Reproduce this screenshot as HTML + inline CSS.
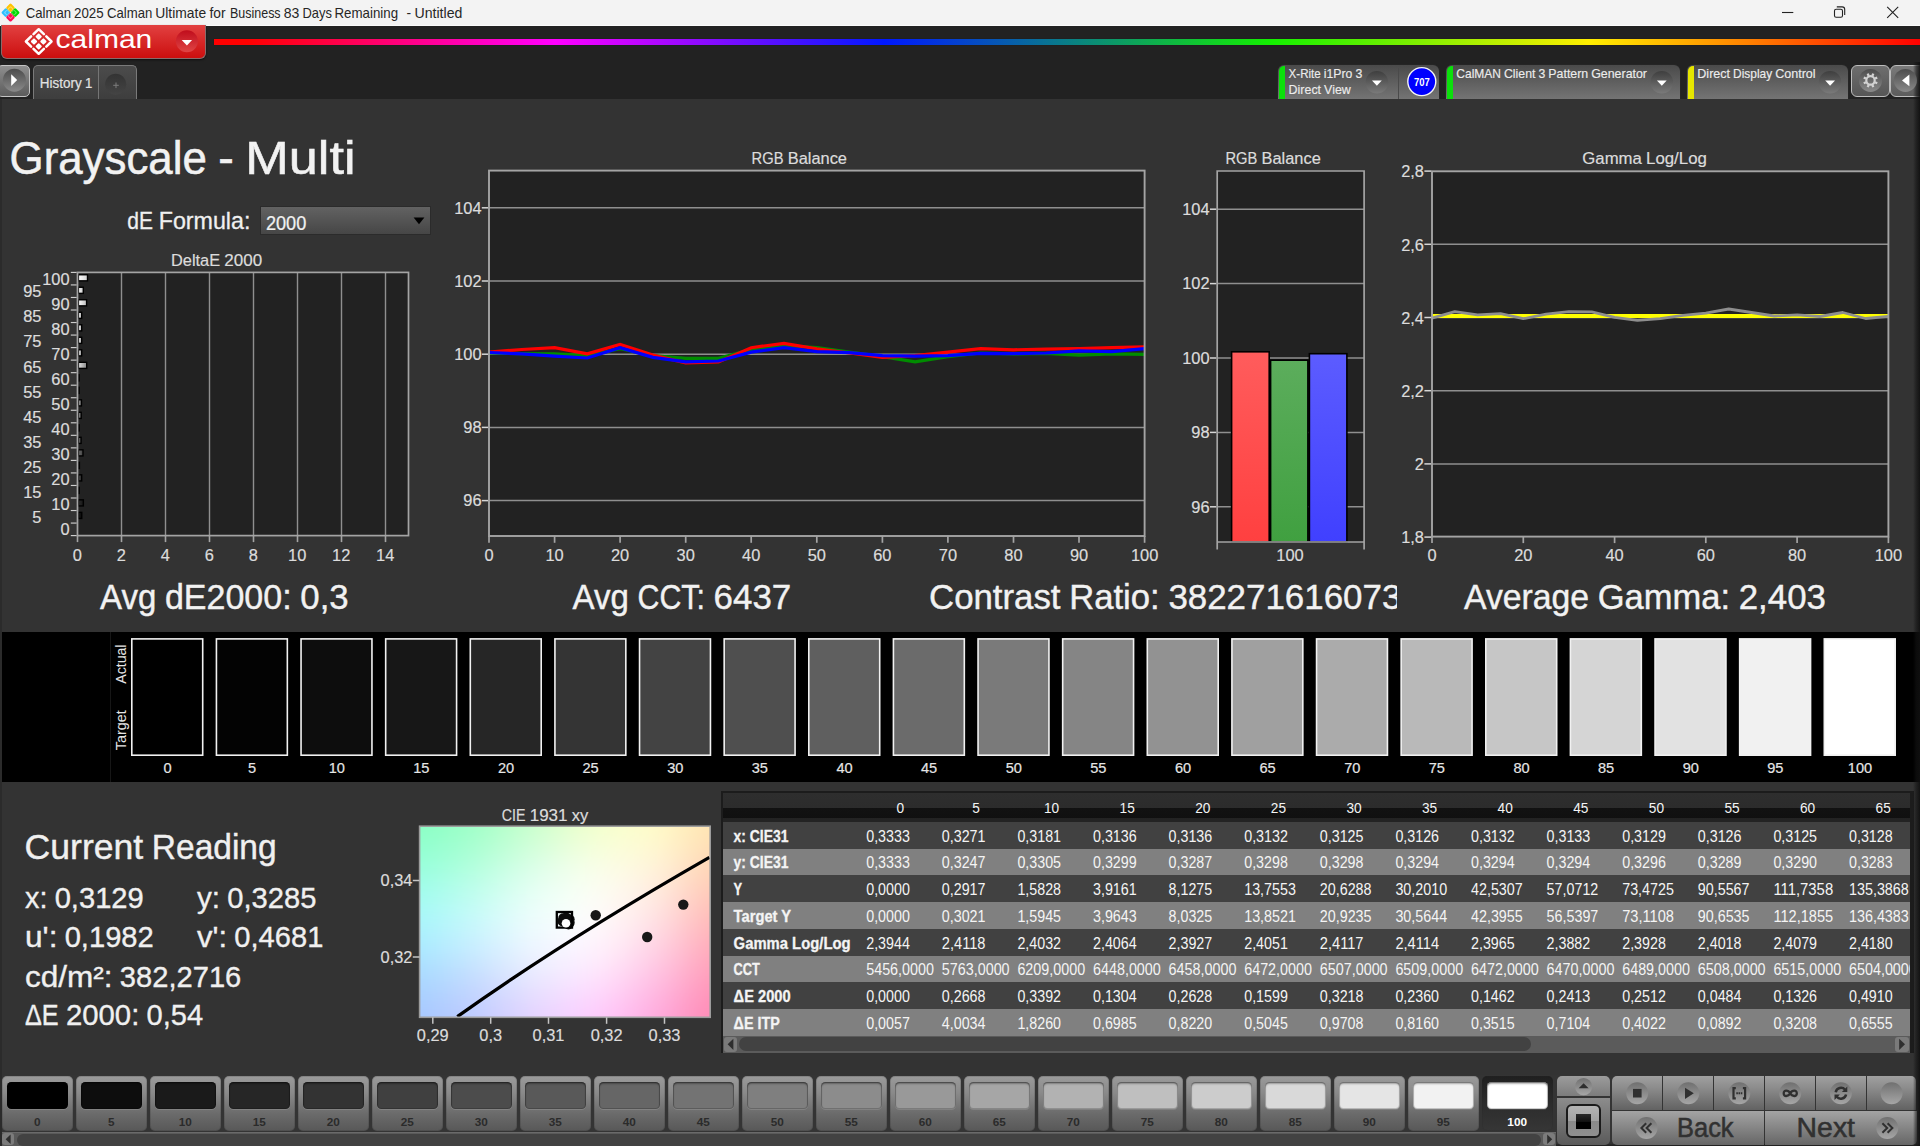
<!DOCTYPE html>
<html lang="en">
<head>
<meta charset="utf-8">
<title>Calman 2025 - Grayscale - Multi</title>
<style>
html,body{margin:0;padding:0;}
body{width:1920px;height:1146px;overflow:hidden;background:#333;font-family:"Liberation Sans",sans-serif;position:relative;}
#app{position:absolute;left:0;top:0;width:1920px;height:1146px;overflow:hidden;}
#app>div{position:absolute;box-sizing:border-box;}
svg.layer{position:absolute;left:0;top:0;width:1920px;height:1146px;overflow:hidden;pointer-events:none;}
svg.layer text{font-family:"Liberation Sans",sans-serif;}
</style>
</head>
<body>
<div id="app">
<div style="left:0px;top:0px;width:1920px;height:26px;background:#f3f3f3;border-bottom:1px solid #fbfbfb"></div>
<div style="left:0px;top:26px;width:1920px;height:73px;background:#222"></div>
<div style="left:213.5px;top:39.25px;width:1706.5px;height:6.2px;background:linear-gradient(90deg,#ff0000 0%,#ff0000 2%,#ff00ff 20%,#0018ff 39.3%,#14f000 62%,#ffee00 80.6%,#ff8000 90%,#ff0000 100%);box-shadow:0 0 1px rgba(0,0,0,.3)"></div>
<div style="left:0.5px;top:25px;width:205.5px;height:33.5px;background:linear-gradient(#e24141,#d82a2a 45%,#cc0f0f);border-radius:0 0 6px 6px;border:1px solid #8a6a6a;border-top:none;box-shadow:0 1px 2px rgba(0,0,0,.6)"></div>
<div style="left:-3px;top:65px;width:33px;height:31.5px;background:linear-gradient(#8e8e8e,#5c5c5c);border:1.5px solid #c4c4c4;border-radius:5px"></div>
<div style="left:33px;top:65px;width:103.5px;height:36px;background:linear-gradient(#4b4b4b,#3d3d3d);border:1px solid #7a7a7a;border-bottom:none;border-radius:5px 5px 0 0"></div>
<div style="left:98px;top:66px;width:1px;height:33px;background:#757575"></div>
<div style="left:1278.3px;top:65px;width:161px;height:34px;background:linear-gradient(#4a4a4a,#747474);border-radius:6px 6px 0 0;box-shadow:0 0 0 1px rgba(40,40,40,.6)"></div>
<div style="left:1279.1px;top:66px;width:6px;height:33px;background:#0be00b;border-radius:5px 0 0 0"></div>
<div style="left:1398px;top:68px;width:1.2px;height:31px;background:#4a4a4a"></div>
<div style="left:1446px;top:65px;width:233.7px;height:34px;background:linear-gradient(#4a4a4a,#747474);border-radius:6px 6px 0 0;box-shadow:0 0 0 1px rgba(40,40,40,.6)"></div>
<div style="left:1446.8px;top:66px;width:6px;height:33px;background:#0be00b;border-radius:5px 0 0 0"></div>
<div style="left:1687px;top:65px;width:160.8px;height:34px;background:linear-gradient(#4a4a4a,#747474);border-radius:6px 6px 0 0;box-shadow:0 0 0 1px rgba(40,40,40,.6)"></div>
<div style="left:1687.8px;top:66px;width:6px;height:33px;background:#e6e600;border-radius:5px 0 0 0"></div>
<div style="left:1851px;top:65px;width:38.5px;height:31.5px;background:linear-gradient(#6e6e6e,#565656);border:1.5px solid #bdbdbd;border-radius:6px"></div>
<div style="left:1889.5px;top:65px;width:40px;height:31.5px;background:linear-gradient(#7a7a7a,#5c5c5c);border:1.5px solid #bdbdbd;border-radius:6px"></div>
<div style="left:0px;top:99px;width:1920px;height:533px;background:#333"></div>
<div style="left:0px;top:99px;width:2px;height:1047px;background:#2a2a2a"></div>
<div style="left:260.2px;top:206px;width:170.9px;height:28.6px;background:linear-gradient(#626262,#464646);border:1px solid #2b2b2b"></div>
<div style="left:0px;top:632px;width:1920px;height:150.3px;background:#000"></div>
<div style="left:110px;top:632px;width:1px;height:150px;background:#161616"></div>
<div style="left:0px;top:782.3px;width:1920px;height:293px;background:#333"></div>
<div style="left:0px;top:782.3px;width:2px;height:364px;background:#2a2a2a"></div>
<div style="left:721px;top:791px;width:1192.5px;height:261.6px;background:#1c1c1c"></div>
<div style="left:722.8px;top:793px;width:1187.2px;height:29px;background:linear-gradient(#2e2e2e 0,#2c2c2c 50%,#121212 51%,#101010 86%,#232323 88%,#232323 100%)"></div>
<div style="left:722.8px;top:821.8px;width:1187.2px;height:27.07px;background:#414141"></div>
<div style="left:722.8px;top:848.57px;width:1187.2px;height:27.07px;background:#808080"></div>
<div style="left:722.8px;top:875.34px;width:1187.2px;height:27.07px;background:#414141"></div>
<div style="left:722.8px;top:902.11px;width:1187.2px;height:27.07px;background:#808080"></div>
<div style="left:722.8px;top:928.88px;width:1187.2px;height:27.07px;background:#414141"></div>
<div style="left:722.8px;top:955.65px;width:1187.2px;height:27.07px;background:#808080"></div>
<div style="left:722.8px;top:982.42px;width:1187.2px;height:27.07px;background:#414141"></div>
<div style="left:722.8px;top:1009.19px;width:1187.2px;height:27.07px;background:#808080"></div>
<div style="left:722.8px;top:1036px;width:1187.2px;height:16.6px;background:#5b5b5b"></div>
<div style="left:723.6px;top:1037px;width:13.6px;height:14.6px;background:#7a7a7a;border-radius:3px"></div>
<div style="left:739px;top:1037.4px;width:792px;height:14px;background:#424242;border-radius:7px"></div>
<div style="left:1895.2px;top:1037px;width:13.6px;height:14.6px;background:#7a7a7a;border-radius:3px"></div>
<div style="left:0px;top:1075px;width:1920px;height:71px;background:linear-gradient(#343434 0,#343434 97%,#222 98.5%)"></div>
<div style="left:1.6px;top:1076.2px;width:71.4px;height:54.8px;background:linear-gradient(#9b9b9b,#8a8a8a 30%,#6a6a6a 70%,#585858);border-radius:5px;box-shadow:inset 0 0 0 1px rgba(40,40,40,.18)"></div>
<div style="left:7.2px;top:1081.6px;width:60.4px;height:27.3px;background:#000000;border-radius:4.5px;box-shadow:inset 0 1.5px 2px rgba(0,0,0,.45),inset 0 0 0 1px rgba(0,0,0,.18),0 1px 0 rgba(255,255,255,.12)"></div>
<div style="left:75.6px;top:1076.2px;width:71.4px;height:54.8px;background:linear-gradient(#9b9b9b,#8a8a8a 30%,#6a6a6a 70%,#585858);border-radius:5px;box-shadow:inset 0 0 0 1px rgba(40,40,40,.18)"></div>
<div style="left:81.2px;top:1081.6px;width:60.4px;height:27.3px;background:#0d0d0d;border-radius:4.5px;box-shadow:inset 0 1.5px 2px rgba(0,0,0,.45),inset 0 0 0 1px rgba(0,0,0,.18),0 1px 0 rgba(255,255,255,.12)"></div>
<div style="left:149.6px;top:1076.2px;width:71.4px;height:54.8px;background:linear-gradient(#9b9b9b,#8a8a8a 30%,#6a6a6a 70%,#585858);border-radius:5px;box-shadow:inset 0 0 0 1px rgba(40,40,40,.18)"></div>
<div style="left:155.2px;top:1081.6px;width:60.4px;height:27.3px;background:#1a1a1a;border-radius:4.5px;box-shadow:inset 0 1.5px 2px rgba(0,0,0,.45),inset 0 0 0 1px rgba(0,0,0,.18),0 1px 0 rgba(255,255,255,.12)"></div>
<div style="left:223.6px;top:1076.2px;width:71.4px;height:54.8px;background:linear-gradient(#9b9b9b,#8a8a8a 30%,#6a6a6a 70%,#585858);border-radius:5px;box-shadow:inset 0 0 0 1px rgba(40,40,40,.18)"></div>
<div style="left:229.2px;top:1081.6px;width:60.4px;height:27.3px;background:#262626;border-radius:4.5px;box-shadow:inset 0 1.5px 2px rgba(0,0,0,.45),inset 0 0 0 1px rgba(0,0,0,.18),0 1px 0 rgba(255,255,255,.12)"></div>
<div style="left:297.6px;top:1076.2px;width:71.4px;height:54.8px;background:linear-gradient(#9b9b9b,#8a8a8a 30%,#6a6a6a 70%,#585858);border-radius:5px;box-shadow:inset 0 0 0 1px rgba(40,40,40,.18)"></div>
<div style="left:303.2px;top:1081.6px;width:60.4px;height:27.3px;background:#333333;border-radius:4.5px;box-shadow:inset 0 1.5px 2px rgba(0,0,0,.45),inset 0 0 0 1px rgba(0,0,0,.18),0 1px 0 rgba(255,255,255,.12)"></div>
<div style="left:371.6px;top:1076.2px;width:71.4px;height:54.8px;background:linear-gradient(#9b9b9b,#8a8a8a 30%,#6a6a6a 70%,#585858);border-radius:5px;box-shadow:inset 0 0 0 1px rgba(40,40,40,.18)"></div>
<div style="left:377.2px;top:1081.6px;width:60.4px;height:27.3px;background:#404040;border-radius:4.5px;box-shadow:inset 0 1.5px 2px rgba(0,0,0,.45),inset 0 0 0 1px rgba(0,0,0,.18),0 1px 0 rgba(255,255,255,.12)"></div>
<div style="left:445.6px;top:1076.2px;width:71.4px;height:54.8px;background:linear-gradient(#9b9b9b,#8a8a8a 30%,#6a6a6a 70%,#585858);border-radius:5px;box-shadow:inset 0 0 0 1px rgba(40,40,40,.18)"></div>
<div style="left:451.2px;top:1081.6px;width:60.4px;height:27.3px;background:#4c4c4c;border-radius:4.5px;box-shadow:inset 0 1.5px 2px rgba(0,0,0,.45),inset 0 0 0 1px rgba(0,0,0,.18),0 1px 0 rgba(255,255,255,.12)"></div>
<div style="left:519.6px;top:1076.2px;width:71.4px;height:54.8px;background:linear-gradient(#9b9b9b,#8a8a8a 30%,#6a6a6a 70%,#585858);border-radius:5px;box-shadow:inset 0 0 0 1px rgba(40,40,40,.18)"></div>
<div style="left:525.2px;top:1081.6px;width:60.4px;height:27.3px;background:#595959;border-radius:4.5px;box-shadow:inset 0 1.5px 2px rgba(0,0,0,.45),inset 0 0 0 1px rgba(0,0,0,.18),0 1px 0 rgba(255,255,255,.12)"></div>
<div style="left:593.6px;top:1076.2px;width:71.4px;height:54.8px;background:linear-gradient(#9b9b9b,#8a8a8a 30%,#6a6a6a 70%,#585858);border-radius:5px;box-shadow:inset 0 0 0 1px rgba(40,40,40,.18)"></div>
<div style="left:599.2px;top:1081.6px;width:60.4px;height:27.3px;background:#666666;border-radius:4.5px;box-shadow:inset 0 1.5px 2px rgba(0,0,0,.45),inset 0 0 0 1px rgba(0,0,0,.18),0 1px 0 rgba(255,255,255,.12)"></div>
<div style="left:667.6px;top:1076.2px;width:71.4px;height:54.8px;background:linear-gradient(#9b9b9b,#8a8a8a 30%,#6a6a6a 70%,#585858);border-radius:5px;box-shadow:inset 0 0 0 1px rgba(40,40,40,.18)"></div>
<div style="left:673.2px;top:1081.6px;width:60.4px;height:27.3px;background:#737373;border-radius:4.5px;box-shadow:inset 0 1.5px 2px rgba(0,0,0,.45),inset 0 0 0 1px rgba(0,0,0,.18),0 1px 0 rgba(255,255,255,.12)"></div>
<div style="left:741.6px;top:1076.2px;width:71.4px;height:54.8px;background:linear-gradient(#9b9b9b,#8a8a8a 30%,#6a6a6a 70%,#585858);border-radius:5px;box-shadow:inset 0 0 0 1px rgba(40,40,40,.18)"></div>
<div style="left:747.2px;top:1081.6px;width:60.4px;height:27.3px;background:#7f7f7f;border-radius:4.5px;box-shadow:inset 0 1.5px 2px rgba(0,0,0,.45),inset 0 0 0 1px rgba(0,0,0,.18),0 1px 0 rgba(255,255,255,.12)"></div>
<div style="left:815.6px;top:1076.2px;width:71.4px;height:54.8px;background:linear-gradient(#9b9b9b,#8a8a8a 30%,#6a6a6a 70%,#585858);border-radius:5px;box-shadow:inset 0 0 0 1px rgba(40,40,40,.18)"></div>
<div style="left:821.2px;top:1081.6px;width:60.4px;height:27.3px;background:#8c8c8c;border-radius:4.5px;box-shadow:inset 0 1.5px 2px rgba(0,0,0,.45),inset 0 0 0 1px rgba(0,0,0,.18),0 1px 0 rgba(255,255,255,.12)"></div>
<div style="left:889.6px;top:1076.2px;width:71.4px;height:54.8px;background:linear-gradient(#9b9b9b,#8a8a8a 30%,#6a6a6a 70%,#585858);border-radius:5px;box-shadow:inset 0 0 0 1px rgba(40,40,40,.18)"></div>
<div style="left:895.2px;top:1081.6px;width:60.4px;height:27.3px;background:#999999;border-radius:4.5px;box-shadow:inset 0 1.5px 2px rgba(0,0,0,.45),inset 0 0 0 1px rgba(0,0,0,.18),0 1px 0 rgba(255,255,255,.12)"></div>
<div style="left:963.6px;top:1076.2px;width:71.4px;height:54.8px;background:linear-gradient(#9b9b9b,#8a8a8a 30%,#6a6a6a 70%,#585858);border-radius:5px;box-shadow:inset 0 0 0 1px rgba(40,40,40,.18)"></div>
<div style="left:969.2px;top:1081.6px;width:60.4px;height:27.3px;background:#a6a6a6;border-radius:4.5px;box-shadow:inset 0 1.5px 2px rgba(0,0,0,.45),inset 0 0 0 1px rgba(0,0,0,.18),0 1px 0 rgba(255,255,255,.12)"></div>
<div style="left:1037.6px;top:1076.2px;width:71.4px;height:54.8px;background:linear-gradient(#9b9b9b,#8a8a8a 30%,#6a6a6a 70%,#585858);border-radius:5px;box-shadow:inset 0 0 0 1px rgba(40,40,40,.18)"></div>
<div style="left:1043.2px;top:1081.6px;width:60.4px;height:27.3px;background:#b2b2b2;border-radius:4.5px;box-shadow:inset 0 1.5px 2px rgba(0,0,0,.45),inset 0 0 0 1px rgba(0,0,0,.18),0 1px 0 rgba(255,255,255,.12)"></div>
<div style="left:1111.6px;top:1076.2px;width:71.4px;height:54.8px;background:linear-gradient(#9b9b9b,#8a8a8a 30%,#6a6a6a 70%,#585858);border-radius:5px;box-shadow:inset 0 0 0 1px rgba(40,40,40,.18)"></div>
<div style="left:1117.2px;top:1081.6px;width:60.4px;height:27.3px;background:#bfbfbf;border-radius:4.5px;box-shadow:inset 0 1.5px 2px rgba(0,0,0,.45),inset 0 0 0 1px rgba(0,0,0,.18),0 1px 0 rgba(255,255,255,.12)"></div>
<div style="left:1185.6px;top:1076.2px;width:71.4px;height:54.8px;background:linear-gradient(#9b9b9b,#8a8a8a 30%,#6a6a6a 70%,#585858);border-radius:5px;box-shadow:inset 0 0 0 1px rgba(40,40,40,.18)"></div>
<div style="left:1191.2px;top:1081.6px;width:60.4px;height:27.3px;background:#cccccc;border-radius:4.5px;box-shadow:inset 0 1.5px 2px rgba(0,0,0,.45),inset 0 0 0 1px rgba(0,0,0,.18),0 1px 0 rgba(255,255,255,.12)"></div>
<div style="left:1259.6px;top:1076.2px;width:71.4px;height:54.8px;background:linear-gradient(#9b9b9b,#8a8a8a 30%,#6a6a6a 70%,#585858);border-radius:5px;box-shadow:inset 0 0 0 1px rgba(40,40,40,.18)"></div>
<div style="left:1265.2px;top:1081.6px;width:60.4px;height:27.3px;background:#d9d9d9;border-radius:4.5px;box-shadow:inset 0 1.5px 2px rgba(0,0,0,.45),inset 0 0 0 1px rgba(0,0,0,.18),0 1px 0 rgba(255,255,255,.12)"></div>
<div style="left:1333.6px;top:1076.2px;width:71.4px;height:54.8px;background:linear-gradient(#9b9b9b,#8a8a8a 30%,#6a6a6a 70%,#585858);border-radius:5px;box-shadow:inset 0 0 0 1px rgba(40,40,40,.18)"></div>
<div style="left:1339.2px;top:1081.6px;width:60.4px;height:27.3px;background:#e5e5e5;border-radius:4.5px;box-shadow:inset 0 1.5px 2px rgba(0,0,0,.45),inset 0 0 0 1px rgba(0,0,0,.18),0 1px 0 rgba(255,255,255,.12)"></div>
<div style="left:1407.6px;top:1076.2px;width:71.4px;height:54.8px;background:linear-gradient(#9b9b9b,#8a8a8a 30%,#6a6a6a 70%,#585858);border-radius:5px;box-shadow:inset 0 0 0 1px rgba(40,40,40,.18)"></div>
<div style="left:1413.2px;top:1081.6px;width:60.4px;height:27.3px;background:#f2f2f2;border-radius:4.5px;box-shadow:inset 0 1.5px 2px rgba(0,0,0,.45),inset 0 0 0 1px rgba(0,0,0,.18),0 1px 0 rgba(255,255,255,.12)"></div>
<div style="left:1481.6px;top:1076.2px;width:71.4px;height:54.8px;background:linear-gradient(#1f1f1f,#2b2b2b 45%,#363636);border-radius:5px;box-shadow:inset 0 0 0 1px rgba(40,40,40,.18)"></div>
<div style="left:1487.2px;top:1081.6px;width:60.4px;height:27.3px;background:#ffffff;border-radius:4.5px;box-shadow:inset 0 1.5px 2px rgba(0,0,0,.45),inset 0 0 0 1px rgba(0,0,0,.18),0 1px 0 rgba(255,255,255,.12)"></div>
<div style="left:0px;top:1132px;width:1556px;height:14px;background:#5a5a5a;border-top:1px solid #6a6a6a"></div>
<div style="left:2.2px;top:1133px;width:12px;height:12.4px;background:#7c7c7c;border-radius:3px"></div>
<div style="left:16.5px;top:1133.6px;width:1524px;height:12.4px;background:#424242;border-radius:6px"></div>
<div style="left:1543.2px;top:1133px;width:12px;height:12.4px;background:#7c7c7c;border-radius:3px"></div>
<div style="left:1557px;top:1076.2px;width:53.4px;height:20.3px;background:linear-gradient(#9c9c9c,#7c7c7c);border-radius:5px 5px 0 0"></div>
<div style="left:1557px;top:1097.8px;width:53.4px;height:46.9px;background:linear-gradient(#8c8c8c,#5a5a5a);border-radius:0 0 5px 5px"></div>
<div style="left:1566.2px;top:1103.6px;width:34.8px;height:34.8px;background:linear-gradient(#b4b4b4 0,#a2a2a2 50%,#8a8a8a 51%,#909090 100%);border:2.6px solid #1b1b1b;border-radius:6px"></div>
<div style="left:1576px;top:1113.8px;width:15.2px;height:15.2px;background:linear-gradient(#2a2a2a 0,#111 50%,#000 51%)"></div>
<div style="left:1612px;top:1076.2px;width:50.3px;height:33.6px;background:linear-gradient(#a0a0a0,#8c8c8c 35%,#626262);border-radius:5px 0 0 0"></div>
<div style="left:1663.3px;top:1076.2px;width:49.9px;height:33.6px;background:linear-gradient(#a0a0a0,#8c8c8c 35%,#626262);border-radius:0"></div>
<div style="left:1714.2px;top:1076.2px;width:50.1px;height:33.6px;background:linear-gradient(#a0a0a0,#8c8c8c 35%,#626262);border-radius:0"></div>
<div style="left:1765.3px;top:1076.2px;width:49.7px;height:33.6px;background:linear-gradient(#a0a0a0,#8c8c8c 35%,#626262);border-radius:0"></div>
<div style="left:1816px;top:1076.2px;width:49.6px;height:33.6px;background:linear-gradient(#a0a0a0,#8c8c8c 35%,#626262);border-radius:0"></div>
<div style="left:1866.6px;top:1076.2px;width:49.8px;height:33.6px;background:linear-gradient(#a0a0a0,#8c8c8c 35%,#626262);border-radius:0 5px 0 0"></div>
<div style="left:1612px;top:1111.2px;width:152.4px;height:33.5px;background:linear-gradient(#a4a4a4,#8e8e8e 35%,#666);border-radius:0 0 0 5px"></div>
<div style="left:1765.3px;top:1111.2px;width:152.1px;height:33.5px;background:linear-gradient(#a4a4a4,#8e8e8e 35%,#666);border-radius:0 0 5px 0"></div>
<div style="left:1913px;top:62px;width:7px;height:1084px;background:linear-gradient(90deg,rgba(20,20,20,0),rgba(20,20,20,.55) 45%,rgba(16,16,16,.92))"></div>
<div style="left:0px;top:99px;width:1.6px;height:1047px;background:#2b2b2b"></div>
<svg class="layer" width="1920" height="1146" viewBox="0 0 1920 1146">
<defs>
<linearGradient id="gRedC" x1="0" y1="0" x2="0" y2="1"><stop offset="0" stop-color="#c00d1c"/><stop offset="1" stop-color="#e04545"/></linearGradient>
<linearGradient id="gCirc" x1="0" y1="0" x2="0" y2="1"><stop offset="0" stop-color="#3e3e3e"/><stop offset="1" stop-color="#7a7a7a"/></linearGradient>
<linearGradient id="gCircL" x1="0" y1="0" x2="0" y2="1"><stop offset="0" stop-color="#4c4c4c"/><stop offset="1" stop-color="#8a8a8a"/></linearGradient>
<linearGradient id="gCircD" x1="0" y1="0" x2="0" y2="1"><stop offset="0" stop-color="#333"/><stop offset="1" stop-color="#444"/></linearGradient>
<linearGradient id="gb100" x1="0" y1="0" x2="1" y2="0"><stop offset="0" stop-color="#ffffff"/><stop offset="1" stop-color="#d1d1d1"/></linearGradient>
<linearGradient id="gb95" x1="0" y1="0" x2="1" y2="0"><stop offset="0" stop-color="#ffffff"/><stop offset="1" stop-color="#c7c7c7"/></linearGradient>
<linearGradient id="gb90" x1="0" y1="0" x2="1" y2="0"><stop offset="0" stop-color="#ffffff"/><stop offset="1" stop-color="#bcbcbc"/></linearGradient>
<linearGradient id="gb85" x1="0" y1="0" x2="1" y2="0"><stop offset="0" stop-color="#ffffff"/><stop offset="1" stop-color="#b2b2b2"/></linearGradient>
<linearGradient id="gb80" x1="0" y1="0" x2="1" y2="0"><stop offset="0" stop-color="#ffffff"/><stop offset="1" stop-color="#a7a7a7"/></linearGradient>
<linearGradient id="gb75" x1="0" y1="0" x2="1" y2="0"><stop offset="0" stop-color="#ffffff"/><stop offset="1" stop-color="#9d9d9d"/></linearGradient>
<linearGradient id="gb70" x1="0" y1="0" x2="1" y2="0"><stop offset="0" stop-color="#f2f2f2"/><stop offset="1" stop-color="#929292"/></linearGradient>
<linearGradient id="gb65" x1="0" y1="0" x2="1" y2="0"><stop offset="0" stop-color="#e2e2e2"/><stop offset="1" stop-color="#888888"/></linearGradient>
<linearGradient id="gb60" x1="0" y1="0" x2="1" y2="0"><stop offset="0" stop-color="#d1d1d1"/><stop offset="1" stop-color="#7d7d7d"/></linearGradient>
<linearGradient id="gb55" x1="0" y1="0" x2="1" y2="0"><stop offset="0" stop-color="#c1c1c1"/><stop offset="1" stop-color="#737373"/></linearGradient>
<linearGradient id="gb50" x1="0" y1="0" x2="1" y2="0"><stop offset="0" stop-color="#b0b0b0"/><stop offset="1" stop-color="#696969"/></linearGradient>
<linearGradient id="gb45" x1="0" y1="0" x2="1" y2="0"><stop offset="0" stop-color="#9f9f9f"/><stop offset="1" stop-color="#5e5e5e"/></linearGradient>
<linearGradient id="gb40" x1="0" y1="0" x2="1" y2="0"><stop offset="0" stop-color="#8f8f8f"/><stop offset="1" stop-color="#545454"/></linearGradient>
<linearGradient id="gb35" x1="0" y1="0" x2="1" y2="0"><stop offset="0" stop-color="#7e7e7e"/><stop offset="1" stop-color="#494949"/></linearGradient>
<linearGradient id="gb30" x1="0" y1="0" x2="1" y2="0"><stop offset="0" stop-color="#6e6e6e"/><stop offset="1" stop-color="#3f3f3f"/></linearGradient>
<linearGradient id="gb25" x1="0" y1="0" x2="1" y2="0"><stop offset="0" stop-color="#5d5d5d"/><stop offset="1" stop-color="#343434"/></linearGradient>
<linearGradient id="gb20" x1="0" y1="0" x2="1" y2="0"><stop offset="0" stop-color="#4c4c4c"/><stop offset="1" stop-color="#2a2a2a"/></linearGradient>
<linearGradient id="gb15" x1="0" y1="0" x2="1" y2="0"><stop offset="0" stop-color="#3c3c3c"/><stop offset="1" stop-color="#1f1f1f"/></linearGradient>
<linearGradient id="gb10" x1="0" y1="0" x2="1" y2="0"><stop offset="0" stop-color="#2b2b2b"/><stop offset="1" stop-color="#151515"/></linearGradient>
<linearGradient id="gb5" x1="0" y1="0" x2="1" y2="0"><stop offset="0" stop-color="#1b1b1b"/><stop offset="1" stop-color="#0a0a0a"/></linearGradient>
<linearGradient id="gR" x1="0" y1="0" x2="0" y2="1"><stop offset="0" stop-color="#ff5c5c"/><stop offset="1" stop-color="#ff4040"/></linearGradient>
<linearGradient id="gG" x1="0" y1="0" x2="0" y2="1"><stop offset="0" stop-color="#5cad5c"/><stop offset="1" stop-color="#40a040"/></linearGradient>
<linearGradient id="gB" x1="0" y1="0" x2="0" y2="1"><stop offset="0" stop-color="#5c5cff"/><stop offset="1" stop-color="#4040ff"/></linearGradient>
<filter id="blurCIE" x="-20%" y="-20%" width="140%" height="140%"><feGaussianBlur stdDeviation="26"/></filter>
<clipPath id="clipCIE"><rect x="419.6" y="826.2" width="290.6" height="191.1"/></clipPath>
<linearGradient id="gCircB" x1="0" y1="0" x2="0" y2="1"><stop offset="0" stop-color="#707070"/><stop offset="1" stop-color="#a6a6a6"/></linearGradient>
</defs>
<rect x="7.14" y="4.54" width="6.72" height="6.72" rx="1.3" fill="#ffc400" transform="rotate(45 10.50 7.90)"/>
<rect x="8.38" y="6.78" width="4.24" height="4.24" rx="0.8" fill="#ffd75c" transform="rotate(45 10.50 8.90)"/>
<rect x="9.09" y="7.89" width="2.83" height="2.83" rx="0.6" fill="#ffc400" transform="rotate(45 10.50 9.30)"/>
<rect x="2.44" y="9.24" width="6.72" height="6.72" rx="1.3" fill="#2ebfff" transform="rotate(45 5.80 12.60)"/>
<rect x="4.68" y="10.48" width="4.24" height="4.24" rx="0.8" fill="#7ed6ff" transform="rotate(45 6.80 12.60)"/>
<rect x="5.79" y="11.19" width="2.83" height="2.83" rx="0.6" fill="#2ebfff" transform="rotate(45 7.20 12.60)"/>
<rect x="11.84" y="9.24" width="6.72" height="6.72" rx="1.3" fill="#00d800" transform="rotate(45 15.20 12.60)"/>
<rect x="12.08" y="10.48" width="4.24" height="4.24" rx="0.8" fill="#5ee85e" transform="rotate(45 14.20 12.60)"/>
<rect x="12.39" y="11.19" width="2.83" height="2.83" rx="0.6" fill="#00d800" transform="rotate(45 13.80 12.60)"/>
<rect x="7.14" y="13.94" width="6.72" height="6.72" rx="1.3" fill="#ff0a54" transform="rotate(45 10.50 17.30)"/>
<rect x="8.38" y="14.18" width="4.24" height="4.24" rx="0.8" fill="#ff6a96" transform="rotate(45 10.50 16.30)"/>
<rect x="9.09" y="14.49" width="2.83" height="2.83" rx="0.6" fill="#ff0a54" transform="rotate(45 10.50 15.90)"/>
<path d="M1782 12.5H1793.3" stroke="#222" stroke-width="1.1" fill="none"/>
<rect x="1834.5" y="9.3" width="8" height="8" rx="1.6" fill="none" stroke="#222" stroke-width="1.1"/>
<path d="M1836.8 6.9H1842.2Q1844.7 6.9 1844.7 9.4V14.9" fill="none" stroke="#222" stroke-width="1.1"/>
<path d="M1887.2 6.9L1898.2 17.9M1898.2 6.9L1887.2 17.9" stroke="#222" stroke-width="1.1" fill="none"/>
<rect x="36.26" y="34.16" width="4.88" height="4.88" rx="0.9" fill="#fff" transform="rotate(45 38.70 36.60)"/>
<rect x="31.56" y="39.06" width="4.88" height="4.88" rx="0.9" fill="#fff" transform="rotate(45 34.00 41.50)"/>
<rect x="40.96" y="39.06" width="4.88" height="4.88" rx="0.9" fill="#fff" transform="rotate(45 43.40 41.50)"/>
<rect x="36.26" y="43.96" width="4.88" height="4.88" rx="0.9" fill="#fff" transform="rotate(45 38.70 46.40)"/>
<path d="M33.5 34.2L38.7 29.2L43.900000000000006 34.2 M33.5 48.8L38.7 53.8L43.900000000000006 48.8 M31.1 36.3L25.900000000000002 41.5L31.1 46.7 M46.300000000000004 36.3L51.5 41.5L46.300000000000004 46.7" fill="none" stroke="#fff" stroke-width="2.5" stroke-linecap="round" stroke-linejoin="round"/>
<circle cx="186.9" cy="41.3" r="11" fill="url(#gRedC)"/>
<path d="M181.7 39.9H192.1L186.9 45.6Z" fill="#fff"/>
<circle cx="14.4" cy="80.2" r="11.5" fill="url(#gCircL)"/>
<path d="M11.2 74.3L17.2 80.1L11.2 85.9Z" fill="#fff"/>
<circle cx="115.7" cy="84.3" r="10.6" fill="url(#gCircD)"/>
<path d="M113.2 85.3H118.8M116 82.5V88.1" stroke="#7c7c7c" stroke-width="1" fill="none"/>
<circle cx="1376.9" cy="82.2" r="11.3" fill="url(#gCirc)"/>
<path d="M1372.0 80.4H1381.8000000000002L1376.9 85.8Z" fill="#fff"/>
<circle cx="1421.8" cy="81.6" r="14" fill="#0000fe" stroke="#f4f4f4" stroke-width="1.4"/>
<circle cx="1661.8" cy="82.2" r="11.3" fill="url(#gCirc)"/>
<path d="M1656.8999999999999 80.4H1666.7L1661.8 85.8Z" fill="#fff"/>
<circle cx="1830.1" cy="82.2" r="11.3" fill="url(#gCirc)"/>
<path d="M1825.1999999999998 80.4H1835.0L1830.1 85.8Z" fill="#fff"/>
<circle cx="1870.5" cy="80.4" r="11.5" fill="url(#gCircL)"/>
<path d="M1874.93 82.24L1877.24 83.19M1872.34 84.83L1873.29 87.14M1868.66 84.83L1867.71 87.14M1866.07 82.24L1863.76 83.19M1866.07 78.56L1863.76 77.61M1868.66 75.97L1867.71 73.66M1872.34 75.97L1873.29 73.66M1874.93 78.56L1877.24 77.61" stroke="#d2d2d2" stroke-width="2.3" fill="none"/>
<circle cx="1870.5" cy="80.4" r="4.2" fill="none" stroke="#d2d2d2" stroke-width="2.2"/>
<circle cx="1905.4" cy="80.4" r="11.5" fill="url(#gCircL)"/>
<path d="M1909.4 74.6L1902 80.4L1909.4 86.2Z" fill="#fff"/>
<path d="M413.6 217.6H424.4L419 224.2Z" fill="#000"/>
<rect x="77.5" y="272.4" width="331.0" height="263.20000000000005" fill="#222"/>
<path d="M121.5 272.4V535.6" stroke="#8f8f8f" stroke-width="1.4"/>
<path d="M121.5 535.6V542.1" stroke="#a4a4a4" stroke-width="1.6"/>
<path d="M165.5 272.4V535.6" stroke="#8f8f8f" stroke-width="1.4"/>
<path d="M165.5 535.6V542.1" stroke="#a4a4a4" stroke-width="1.6"/>
<path d="M209.5 272.4V535.6" stroke="#8f8f8f" stroke-width="1.4"/>
<path d="M209.5 535.6V542.1" stroke="#a4a4a4" stroke-width="1.6"/>
<path d="M253.5 272.4V535.6" stroke="#8f8f8f" stroke-width="1.4"/>
<path d="M253.5 535.6V542.1" stroke="#a4a4a4" stroke-width="1.6"/>
<path d="M297.5 272.4V535.6" stroke="#8f8f8f" stroke-width="1.4"/>
<path d="M297.5 535.6V542.1" stroke="#a4a4a4" stroke-width="1.6"/>
<path d="M341.5 272.4V535.6" stroke="#8f8f8f" stroke-width="1.4"/>
<path d="M341.5 535.6V542.1" stroke="#a4a4a4" stroke-width="1.6"/>
<path d="M385.5 272.4V535.6" stroke="#8f8f8f" stroke-width="1.4"/>
<path d="M385.5 535.6V542.1" stroke="#a4a4a4" stroke-width="1.6"/>
<path d="M77.5 535.6V542.1" stroke="#a4a4a4" stroke-width="1.6"/>
<path d="M70.8 272.40H76.7" stroke="#cdcdcd" stroke-width="1.15"/>
<rect x="78.4" y="274.75" width="9.09" height="6.1" fill="url(#gb100)" stroke="#000" stroke-width="1.4"/>
<path d="M70.8 284.93H76.7" stroke="#cdcdcd" stroke-width="1.15"/>
<rect x="78.4" y="287.25" width="4.89" height="6.1" fill="url(#gb95)" stroke="#000" stroke-width="1.4"/>
<path d="M70.8 297.47H76.7" stroke="#cdcdcd" stroke-width="1.15"/>
<rect x="78.4" y="299.76" width="8.19" height="6.1" fill="url(#gb90)" stroke="#000" stroke-width="1.4"/>
<path d="M70.8 310.00H76.7" stroke="#cdcdcd" stroke-width="1.15"/>
<rect x="78.4" y="312.26" width="3.26" height="6.1" fill="url(#gb85)" stroke="#000" stroke-width="1.4"/>
<path d="M70.8 322.53H76.7" stroke="#cdcdcd" stroke-width="1.15"/>
<rect x="78.4" y="324.77" width="3.31" height="6.1" fill="url(#gb80)" stroke="#000" stroke-width="1.4"/>
<path d="M70.8 335.07H76.7" stroke="#cdcdcd" stroke-width="1.15"/>
<rect x="78.4" y="337.28" width="3.31" height="6.1" fill="url(#gb75)" stroke="#000" stroke-width="1.4"/>
<path d="M70.8 347.60H76.7" stroke="#cdcdcd" stroke-width="1.15"/>
<rect x="78.4" y="349.78" width="3.26" height="6.1" fill="url(#gb70)" stroke="#000" stroke-width="1.4"/>
<path d="M70.8 360.13H76.7" stroke="#cdcdcd" stroke-width="1.15"/>
<rect x="78.4" y="362.29" width="8.30" height="6.1" fill="url(#gb65)" stroke="#000" stroke-width="1.4"/>
<path d="M70.8 372.67H76.7" stroke="#cdcdcd" stroke-width="1.15"/>
<rect x="78.4" y="374.79" width="0.80" height="6.1" fill="url(#gb60)" stroke="#000" stroke-width="1.4"/>
<path d="M70.8 385.20H76.7" stroke="#cdcdcd" stroke-width="1.15"/>
<rect x="78.4" y="387.30" width="0.80" height="6.1" fill="url(#gb55)" stroke="#000" stroke-width="1.4"/>
<path d="M70.8 397.73H76.7" stroke="#cdcdcd" stroke-width="1.15"/>
<rect x="78.4" y="399.80" width="3.03" height="6.1" fill="url(#gb50)" stroke="#000" stroke-width="1.4"/>
<path d="M70.8 410.27H76.7" stroke="#cdcdcd" stroke-width="1.15"/>
<rect x="78.4" y="412.31" width="2.81" height="6.1" fill="url(#gb45)" stroke="#000" stroke-width="1.4"/>
<path d="M70.8 422.80H76.7" stroke="#cdcdcd" stroke-width="1.15"/>
<rect x="78.4" y="424.81" width="0.80" height="6.1" fill="url(#gb40)" stroke="#000" stroke-width="1.4"/>
<path d="M70.8 435.33H76.7" stroke="#cdcdcd" stroke-width="1.15"/>
<rect x="78.4" y="437.31" width="2.69" height="6.1" fill="url(#gb35)" stroke="#000" stroke-width="1.4"/>
<path d="M70.8 447.87H76.7" stroke="#cdcdcd" stroke-width="1.15"/>
<rect x="78.4" y="449.82" width="4.58" height="6.1" fill="url(#gb30)" stroke="#000" stroke-width="1.4"/>
<path d="M70.8 460.40H76.7" stroke="#cdcdcd" stroke-width="1.15"/>
<rect x="78.4" y="462.32" width="1.02" height="6.1" fill="url(#gb25)" stroke="#000" stroke-width="1.4"/>
<path d="M70.8 472.93H76.7" stroke="#cdcdcd" stroke-width="1.15"/>
<rect x="78.4" y="474.83" width="3.28" height="6.1" fill="url(#gb20)" stroke="#000" stroke-width="1.4"/>
<path d="M70.8 485.47H76.7" stroke="#cdcdcd" stroke-width="1.15"/>
<rect x="78.4" y="487.33" width="0.80" height="6.1" fill="url(#gb15)" stroke="#000" stroke-width="1.4"/>
<path d="M70.8 498.00H76.7" stroke="#cdcdcd" stroke-width="1.15"/>
<rect x="78.4" y="499.84" width="4.96" height="6.1" fill="url(#gb10)" stroke="#000" stroke-width="1.4"/>
<path d="M70.8 510.53H76.7" stroke="#cdcdcd" stroke-width="1.15"/>
<rect x="78.4" y="512.35" width="3.37" height="6.1" fill="url(#gb5)" stroke="#000" stroke-width="1.4"/>
<path d="M70.8 523.07H76.7" stroke="#cdcdcd" stroke-width="1.15"/>
<path d="M70.8 535.6H76.7" stroke="#cdcdcd" stroke-width="1.15"/>
<rect x="77.5" y="272.4" width="331.0" height="263.20000000000005" fill="none" stroke="#a4a4a4" stroke-width="1.7"/>
<rect x="489" y="170.6" width="655.5999999999999" height="365.4" fill="#222"/>
<path d="M489 500.6H1144.6" stroke="#8f8f8f" stroke-width="1.5"/>
<path d="M481.8 500.6H488.2" stroke="#d6d6d6" stroke-width="1.5"/>
<path d="M489 427.4H1144.6" stroke="#8f8f8f" stroke-width="1.5"/>
<path d="M481.8 427.4H488.2" stroke="#d6d6d6" stroke-width="1.5"/>
<path d="M489 354.2H1144.6" stroke="#8f8f8f" stroke-width="1.5"/>
<path d="M481.8 354.2H488.2" stroke="#d6d6d6" stroke-width="1.5"/>
<path d="M489 281.0H1144.6" stroke="#8f8f8f" stroke-width="1.5"/>
<path d="M481.8 281.0H488.2" stroke="#d6d6d6" stroke-width="1.5"/>
<path d="M489 207.8H1144.6" stroke="#8f8f8f" stroke-width="1.5"/>
<path d="M481.8 207.8H488.2" stroke="#d6d6d6" stroke-width="1.5"/>
<polyline points="489.0,353.0 521.8,353.6 554.6,353.9 587.3,355.7 620.1,348.6 652.9,355.7 685.7,358.3 718.5,358.3 751.2,349.5 784.0,345.6 816.8,347.5 849.6,352.1 882.4,356.6 915.1,361.9 947.9,356.6 980.7,353.0 1013.5,353.9 1046.3,353.4 1079.0,355.1 1111.8,353.9 1144.6,354.4" fill="none" stroke="#008c00" stroke-width="3.2" stroke-linejoin="miter"/>
<polyline points="489.0,352.1 521.8,349.5 554.6,347.7 587.3,353.9 620.1,344.5 652.9,355.1 685.7,362.8 718.5,361.9 751.2,347.7 784.0,343.3 816.8,348.9 849.6,353.0 882.4,357.4 915.1,355.7 947.9,352.1 980.7,348.6 1013.5,349.8 1046.3,349.1 1079.0,348.6 1111.8,347.7 1144.6,346.8" fill="none" stroke="#ff0000" stroke-width="3.2" stroke-linejoin="miter"/>
<polyline points="489.0,352.5 521.8,353.9 554.6,356.2 587.3,358.0 620.1,347.7 652.9,357.4 685.7,361.9 718.5,361.0 751.2,352.1 784.0,347.7 816.8,351.6 849.6,352.7 882.4,355.7 915.1,356.2 947.9,355.7 980.7,353.4 1013.5,353.6 1046.3,353.0 1079.0,350.9 1111.8,351.6 1144.6,348.6" fill="none" stroke="#0000ff" stroke-width="3.2" stroke-linejoin="miter"/>
<rect x="489" y="170.6" width="655.5999999999999" height="365.4" fill="none" stroke="#a4a4a4" stroke-width="1.9"/>
<path d="M489.0 536V542.8" stroke="#a4a4a4" stroke-width="1.7"/>
<path d="M554.6 536V542.8" stroke="#a4a4a4" stroke-width="1.7"/>
<path d="M620.1 536V542.8" stroke="#a4a4a4" stroke-width="1.7"/>
<path d="M685.7 536V542.8" stroke="#a4a4a4" stroke-width="1.7"/>
<path d="M751.2 536V542.8" stroke="#a4a4a4" stroke-width="1.7"/>
<path d="M816.8 536V542.8" stroke="#a4a4a4" stroke-width="1.7"/>
<path d="M882.4 536V542.8" stroke="#a4a4a4" stroke-width="1.7"/>
<path d="M947.9 536V542.8" stroke="#a4a4a4" stroke-width="1.7"/>
<path d="M1013.5 536V542.8" stroke="#a4a4a4" stroke-width="1.7"/>
<path d="M1079.0 536V542.8" stroke="#a4a4a4" stroke-width="1.7"/>
<path d="M1144.6 536V542.8" stroke="#a4a4a4" stroke-width="1.7"/>
<rect x="1217.2" y="171" width="146.89999999999986" height="371" fill="#222"/>
<path d="M1217.2 506.8H1364.1" stroke="#8f8f8f" stroke-width="1.5"/>
<path d="M1210.0 506.8H1216.4" stroke="#d6d6d6" stroke-width="1.5"/>
<path d="M1217.2 432.4H1364.1" stroke="#8f8f8f" stroke-width="1.5"/>
<path d="M1210.0 432.4H1216.4" stroke="#d6d6d6" stroke-width="1.5"/>
<path d="M1217.2 358.0H1364.1" stroke="#8f8f8f" stroke-width="1.5"/>
<path d="M1210.0 358.0H1216.4" stroke="#d6d6d6" stroke-width="1.5"/>
<path d="M1217.2 283.6H1364.1" stroke="#8f8f8f" stroke-width="1.5"/>
<path d="M1210.0 283.6H1216.4" stroke="#d6d6d6" stroke-width="1.5"/>
<path d="M1217.2 209.2H1364.1" stroke="#8f8f8f" stroke-width="1.5"/>
<path d="M1210.0 209.2H1216.4" stroke="#d6d6d6" stroke-width="1.5"/>
<rect x="1231.6" y="351.8" width="37.6" height="190.2" fill="url(#gR)" stroke="#000" stroke-width="1.6"/>
<rect x="1270.6" y="360.2" width="37.3" height="181.8" fill="url(#gG)" stroke="#000" stroke-width="1.6"/>
<rect x="1309.4" y="353.7" width="37.5" height="188.3" fill="url(#gB)" stroke="#000" stroke-width="1.6"/>
<path d="M1217.2 549.5V171H1364.1V549.5M1217.2 542H1364.1" fill="none" stroke="#a4a4a4" stroke-width="1.7"/>
<rect x="1432" y="171.3" width="456.4000000000001" height="365.3" fill="#222"/>
<path d="M1424.4 537.1H1431.2" stroke="#d6d6d6" stroke-width="1.5"/>
<path d="M1432 463.9H1888.4" stroke="#8f8f8f" stroke-width="1.5"/>
<path d="M1424.4 463.9H1431.2" stroke="#d6d6d6" stroke-width="1.5"/>
<path d="M1432 390.7H1888.4" stroke="#8f8f8f" stroke-width="1.5"/>
<path d="M1424.4 390.7H1431.2" stroke="#d6d6d6" stroke-width="1.5"/>
<path d="M1432 317.5H1888.4" stroke="#8f8f8f" stroke-width="1.5"/>
<path d="M1424.4 317.5H1431.2" stroke="#d6d6d6" stroke-width="1.5"/>
<path d="M1432 244.3H1888.4" stroke="#8f8f8f" stroke-width="1.5"/>
<path d="M1424.4 244.3H1431.2" stroke="#d6d6d6" stroke-width="1.5"/>
<path d="M1424.4 171.1H1431.2" stroke="#d6d6d6" stroke-width="1.5"/>
<path d="M1432 316H1888.4" stroke="#ffff00" stroke-width="4.2"/>
<polyline points="1432.0,318.1 1454.8,311.7 1477.6,314.8 1500.5,313.7 1523.3,318.7 1546.1,314.1 1568.9,311.7 1591.7,311.8 1614.6,317.3 1637.4,320.3 1660.2,318.6 1683.0,315.3 1705.8,313.1 1728.7,309.0 1751.5,312.5 1774.3,316.0 1797.1,314.8 1819.9,316.5 1842.8,312.5 1865.6,318.5 1888.4,316.3" fill="none" stroke="#8e8e8e" stroke-width="2.8" stroke-linejoin="round"/>
<rect x="1432" y="171.3" width="456.4000000000001" height="365.3" fill="none" stroke="#a4a4a4" stroke-width="1.9"/>
<path d="M1432.0 536.6V543.1" stroke="#a4a4a4" stroke-width="1.7"/>
<path d="M1523.3 536.6V543.1" stroke="#a4a4a4" stroke-width="1.7"/>
<path d="M1614.6 536.6V543.1" stroke="#a4a4a4" stroke-width="1.7"/>
<path d="M1705.8 536.6V543.1" stroke="#a4a4a4" stroke-width="1.7"/>
<path d="M1797.1 536.6V543.1" stroke="#a4a4a4" stroke-width="1.7"/>
<path d="M1888.4 536.6V543.1" stroke="#a4a4a4" stroke-width="1.7"/>
<clipPath id="clipCR"><rect x="900" y="570" width="497" height="60"/></clipPath>
<rect x="131.80" y="638.9" width="70.9" height="116.3" fill="#000000" stroke="#f1f1f1" stroke-width="1.6"/>
<rect x="216.43" y="638.9" width="70.9" height="116.3" fill="#030303" stroke="#f1f1f1" stroke-width="1.6"/>
<rect x="301.05" y="638.9" width="70.9" height="116.3" fill="#0d0d0d" stroke="#f1f1f1" stroke-width="1.6"/>
<rect x="385.68" y="638.9" width="70.9" height="116.3" fill="#171717" stroke="#f1f1f1" stroke-width="1.6"/>
<rect x="470.30" y="638.9" width="70.9" height="116.3" fill="#262626" stroke="#f1f1f1" stroke-width="1.6"/>
<rect x="554.92" y="638.9" width="70.9" height="116.3" fill="#343434" stroke="#f1f1f1" stroke-width="1.6"/>
<rect x="639.55" y="638.9" width="70.9" height="116.3" fill="#434343" stroke="#f1f1f1" stroke-width="1.6"/>
<rect x="724.17" y="638.9" width="70.9" height="116.3" fill="#4f4f4f" stroke="#f1f1f1" stroke-width="1.6"/>
<rect x="808.80" y="638.9" width="70.9" height="116.3" fill="#5f5f5f" stroke="#f1f1f1" stroke-width="1.6"/>
<rect x="893.42" y="638.9" width="70.9" height="116.3" fill="#6b6b6b" stroke="#f1f1f1" stroke-width="1.6"/>
<rect x="978.05" y="638.9" width="70.9" height="116.3" fill="#7a7a7a" stroke="#f1f1f1" stroke-width="1.6"/>
<rect x="1062.67" y="638.9" width="70.9" height="116.3" fill="#858585" stroke="#f1f1f1" stroke-width="1.6"/>
<rect x="1147.30" y="638.9" width="70.9" height="116.3" fill="#929292" stroke="#f1f1f1" stroke-width="1.6"/>
<rect x="1231.92" y="638.9" width="70.9" height="116.3" fill="#a0a0a0" stroke="#f1f1f1" stroke-width="1.6"/>
<rect x="1316.55" y="638.9" width="70.9" height="116.3" fill="#ababab" stroke="#f1f1f1" stroke-width="1.6"/>
<rect x="1401.17" y="638.9" width="70.9" height="116.3" fill="#b9b9b9" stroke="#f1f1f1" stroke-width="1.6"/>
<rect x="1485.80" y="638.9" width="70.9" height="116.3" fill="#c6c6c6" stroke="#f1f1f1" stroke-width="1.6"/>
<rect x="1570.42" y="638.9" width="70.9" height="116.3" fill="#d5d5d5" stroke="#f1f1f1" stroke-width="1.6"/>
<rect x="1655.05" y="638.9" width="70.9" height="116.3" fill="#e2e2e2" stroke="#f1f1f1" stroke-width="1.6"/>
<rect x="1739.67" y="638.9" width="70.9" height="116.3" fill="#f1f1f1" stroke="#f1f1f1" stroke-width="1.6"/>
<rect x="1824.30" y="638.9" width="70.9" height="116.3" fill="#ffffff" stroke="#f1f1f1" stroke-width="1.6"/>
<g clip-path="url(#clipCIE)"><g filter="url(#blurCIE)"><rect x="299.6" y="706.2" width="530.6" height="431.0999999999999" fill="#fff"/><rect x="290.5" y="702.3" width="158.6" height="148.3" fill="#86ffc0"/><rect x="448.7" y="702.3" width="58.6" height="148.3" fill="#9cffc4"/><rect x="506.8" y="702.3" width="58.6" height="148.3" fill="#c8ffc8"/><rect x="564.9" y="702.3" width="58.6" height="148.3" fill="#f2ffc8"/><rect x="623.0" y="702.3" width="58.6" height="148.3" fill="#ffffc8"/><rect x="681.1" y="702.3" width="158.6" height="148.3" fill="#ffe4b0"/><rect x="290.5" y="850.1" width="158.6" height="48.3" fill="#98ffe0"/><rect x="448.7" y="850.1" width="58.6" height="48.3" fill="#b8ffe0"/><rect x="506.8" y="850.1" width="58.6" height="48.3" fill="#e0fff0"/><rect x="564.9" y="850.1" width="58.6" height="48.3" fill="#fcfff0"/><rect x="623.0" y="850.1" width="58.6" height="48.3" fill="#fff4e0"/><rect x="681.1" y="850.1" width="158.6" height="48.3" fill="#ffd0b4"/><rect x="290.5" y="897.9" width="158.6" height="48.3" fill="#a8f8ff"/><rect x="448.7" y="897.9" width="58.6" height="48.3" fill="#ccfcff"/><rect x="506.8" y="897.9" width="58.6" height="48.3" fill="#f4ffff"/><rect x="564.9" y="897.9" width="58.6" height="48.3" fill="#ffffff"/><rect x="623.0" y="897.9" width="58.6" height="48.3" fill="#ffe4e8"/><rect x="681.1" y="897.9" width="158.6" height="48.3" fill="#ffb4b4"/><rect x="290.5" y="945.6" width="158.6" height="48.3" fill="#a8dcff"/><rect x="448.7" y="945.6" width="58.6" height="48.3" fill="#c8e0ff"/><rect x="506.8" y="945.6" width="58.6" height="48.3" fill="#ecf0ff"/><rect x="564.9" y="945.6" width="58.6" height="48.3" fill="#ffecff"/><rect x="623.0" y="945.6" width="58.6" height="48.3" fill="#ffc8e8"/><rect x="681.1" y="945.6" width="158.6" height="48.3" fill="#ff9cb8"/><rect x="290.5" y="993.4" width="158.6" height="148.3" fill="#a4c4ff"/><rect x="448.7" y="993.4" width="58.6" height="148.3" fill="#c0c8ff"/><rect x="506.8" y="993.4" width="58.6" height="148.3" fill="#e4d0ff"/><rect x="564.9" y="993.4" width="58.6" height="148.3" fill="#ffc8ff"/><rect x="623.0" y="993.4" width="58.6" height="148.3" fill="#ffa8e0"/><rect x="681.1" y="993.4" width="158.6" height="148.3" fill="#ff84b0"/></g></g>
<path d="M457.3 1016.6 C520 972,600 920,709.4 857.4" fill="none" stroke="#000" stroke-width="3.3" clip-path="url(#clipCIE)"/>
<circle cx="595.7" cy="915.2" r="5.2" fill="#181818"/>
<circle cx="647.2" cy="937" r="5.2" fill="#181818"/>
<circle cx="683.3" cy="904.6" r="5.2" fill="#181818"/>
<circle cx="563.2" cy="918.2" r="5" fill="#0c0c0c"/>
<circle cx="566.2" cy="917.6" r="5" fill="#0c0c0c"/>
<circle cx="569.6" cy="919.2" r="5" fill="#0c0c0c"/>
<circle cx="569.7" cy="922.8" r="5" fill="#0c0c0c"/>
<circle cx="562.6" cy="921.5" r="5" fill="#0c0c0c"/>
<circle cx="565" cy="921" r="5" fill="#0c0c0c"/>
<circle cx="568.5" cy="924.5" r="5" fill="#0c0c0c"/>
<rect x="556.8" y="912" width="15.2" height="15.6" fill="none" stroke="#000" stroke-width="2.3"/>
<circle cx="566" cy="923.2" r="4.3" fill="#fff"/>
<rect x="419.6" y="826.2" width="290.6" height="191.0999999999999" fill="none" stroke="#9c9c9c" stroke-width="1.6"/>
<path d="M412.8 880.5H419.6" stroke="#c4c4c4" stroke-width="1.5"/>
<path d="M412.8 957H419.6" stroke="#c4c4c4" stroke-width="1.5"/>
<path d="M432.8 1017.3V1023.8" stroke="#c4c4c4" stroke-width="1.5"/>
<path d="M490.7 1017.3V1023.8" stroke="#c4c4c4" stroke-width="1.5"/>
<path d="M548.5 1017.3V1023.8" stroke="#c4c4c4" stroke-width="1.5"/>
<path d="M606.6 1017.3V1023.8" stroke="#c4c4c4" stroke-width="1.5"/>
<path d="M664.5 1017.3V1023.8" stroke="#c4c4c4" stroke-width="1.5"/>
<clipPath id="clipTab"><rect x="722.8" y="793" width="1187.2" height="243"/></clipPath>
<path d="M727.6 1044.3L733.4 1038.7V1049.9Z" fill="#2e2e2e"/>
<path d="M1905 1044.3L1899.2 1038.7V1049.9Z" fill="#2e2e2e"/>
<path d="M5.6 1139.3L10.6 1134.6V1144Z" fill="#2e2e2e"/>
<path d="M1552.2 1139.3L1547.2 1134.6V1144Z" fill="#2e2e2e"/>
<clipPath id="clipUp"><rect x="1557" y="1076.2" width="53.4" height="20.3"/></clipPath>
<circle cx="1583.6" cy="1086.6" r="8.6" fill="url(#gCircB)" clip-path="url(#clipUp)"/>
<path d="M1578.6 1088.3L1583.6 1083.3L1588.6 1088.3Z" fill="#2e2e2e"/>
<circle cx="1637.2" cy="1093.2" r="11" fill="url(#gCircB)"/>
<circle cx="1688.3" cy="1093.2" r="11" fill="url(#gCircB)"/>
<circle cx="1739.3" cy="1093.2" r="11" fill="url(#gCircB)"/>
<circle cx="1790.2" cy="1093.2" r="11" fill="url(#gCircB)"/>
<circle cx="1840.9" cy="1093.2" r="11" fill="url(#gCircB)"/>
<circle cx="1891.6" cy="1093.2" r="11" fill="url(#gCircB)"/>
<rect x="1633.0" y="1088.9" width="8.6" height="8.6" fill="#303030"/>
<path d="M1685.0 1087.7L1693.8 1093.3L1685.0 1098.9Z" fill="#303030"/>
<path d="M1735.8 1088.2H1733.5V1098.4H1735.8M1742.9 1088.2H1745.1V1098.4H1742.9" fill="none" stroke="#303030" stroke-width="2.2"/>
<path d="M1736.3 1093.3H1737.9M1738.5 1093.3H1740.1M1740.8 1093.3H1742.3" fill="none" stroke="#303030" stroke-width="2"/>
<path d="M1790.2 1093.3C1788.2 1089.8 1783.7 1089.6 1783.7 1093.3C1783.7 1097 1788.2 1096.8 1790.2 1093.3C1792.2 1089.8 1796.8 1089.6 1796.8 1093.3C1796.8 1097 1792.2 1096.8 1790.2 1093.3Z" fill="none" stroke="#303030" stroke-width="2.3"/>
<path d="M1835.7 1092.2A5.4 5.4 0 0 1 1845.1 1089.8M1846.1 1094.4A5.4 5.4 0 0 1 1836.7 1096.8" fill="none" stroke="#303030" stroke-width="2.5"/>
<path d="M1847.3 1086.6V1092H1841.9ZM1834.5 1100V1094.6H1839.9Z" fill="#303030"/>
<circle cx="1646.5" cy="1128" r="11" fill="url(#gCircB)"/>
<circle cx="1887.3" cy="1128" r="11" fill="url(#gCircB)"/>
<path d="M1646.2 1123.2L1641.4 1128L1646.2 1132.8M1651.4 1123.2L1646.6 1128L1651.4 1132.8" fill="none" stroke="#303030" stroke-width="2"/>
<path d="M1882.4 1123.2L1887.2 1128L1882.4 1132.8M1887.6 1123.2L1892.4 1128L1887.6 1132.8" fill="none" stroke="#303030" stroke-width="2"/>
</svg>
<svg class="layer" width="1920" height="1146" viewBox="0 0 1920 1146">
<text y="17.9" font-size="14.3" fill="#262626"><tspan x="25.75" textLength="45.35" lengthAdjust="spacingAndGlyphs">Calman</tspan> <tspan x="74.00" textLength="29.60" lengthAdjust="spacingAndGlyphs">2025</tspan> <tspan x="107.00" textLength="45.35" lengthAdjust="spacingAndGlyphs">Calman</tspan> <tspan x="155.25" textLength="50.85" lengthAdjust="spacingAndGlyphs">Ultimate</tspan> <tspan x="209.50" textLength="16.10" lengthAdjust="spacingAndGlyphs">for</tspan> <tspan x="230.00" textLength="50.60" lengthAdjust="spacingAndGlyphs">Business</tspan> <tspan x="283.75" textLength="15.60" lengthAdjust="spacingAndGlyphs">83</tspan> <tspan x="302.50" textLength="29.35" lengthAdjust="spacingAndGlyphs">Days</tspan> <tspan x="334.50" textLength="63.60" lengthAdjust="spacingAndGlyphs">Remaining</tspan>  <tspan x="406.50" textLength="4.60" lengthAdjust="spacingAndGlyphs">-</tspan> <tspan x="414.50" textLength="47.85" lengthAdjust="spacingAndGlyphs">Untitled</tspan></text>
<text x="55.50" y="48.30" font-size="26.20" fill="#fff" textLength="96.80" lengthAdjust="spacingAndGlyphs">calman</text>
<text y="88.10" font-size="13.92" fill="#e2e2e2" stroke="#e2e2e2" stroke-width="0.18"><tspan x="39.70" textLength="41.96" lengthAdjust="spacingAndGlyphs">History</tspan> <tspan x="84.94" textLength="7.36" lengthAdjust="spacingAndGlyphs">1</tspan></text>
<text y="77.90" font-size="12.33" fill="#ececec" stroke="#ececec" stroke-width="0.15"><tspan x="1288.60" textLength="32.17" lengthAdjust="spacingAndGlyphs">X-Rite</tspan> <tspan x="1323.83" textLength="28.56" lengthAdjust="spacingAndGlyphs">i1Pro</tspan> <tspan x="1355.45" textLength="6.85" lengthAdjust="spacingAndGlyphs">3</tspan></text>
<text y="94.20" font-size="12.33" fill="#ececec" stroke="#ececec" stroke-width="0.15"><tspan x="1288.60" textLength="32.47" lengthAdjust="spacingAndGlyphs">Direct</tspan> <tspan x="1324.08" textLength="26.72" lengthAdjust="spacingAndGlyphs">View</tspan></text>
<text x="1414.10" y="85.90" font-size="11.10" fill="#fff" font-weight="bold" textLength="15.80" lengthAdjust="spacingAndGlyphs">707</text>
<text y="77.90" font-size="12.33" fill="#ececec" stroke="#ececec" stroke-width="0.15"><tspan x="1456.30" textLength="44.65" lengthAdjust="spacingAndGlyphs">CalMAN</tspan> <tspan x="1503.99" textLength="31.47" lengthAdjust="spacingAndGlyphs">Client</tspan> <tspan x="1538.50" textLength="6.81" lengthAdjust="spacingAndGlyphs">3</tspan> <tspan x="1548.36" textLength="39.80" lengthAdjust="spacingAndGlyphs">Pattern</tspan> <tspan x="1591.20" textLength="55.80" lengthAdjust="spacingAndGlyphs">Generator</tspan></text>
<text y="77.90" font-size="12.33" fill="#ececec" stroke="#ececec" stroke-width="0.15"><tspan x="1697.30" textLength="32.77" lengthAdjust="spacingAndGlyphs">Direct</tspan> <tspan x="1733.11" textLength="39.07" lengthAdjust="spacingAndGlyphs">Display</tspan> <tspan x="1775.22" textLength="40.38" lengthAdjust="spacingAndGlyphs">Control</tspan></text>
<text y="173.70" font-size="46.87" fill="#f2f2f2" stroke="#f2f2f2" stroke-width="0.56"><tspan x="9.60" textLength="197.15" lengthAdjust="spacingAndGlyphs">Grayscale</tspan> <tspan x="218.25" textLength="15.58" lengthAdjust="spacingAndGlyphs">-</tspan> <tspan x="245.34" textLength="110.26" lengthAdjust="spacingAndGlyphs">Multi</tspan></text>
<text y="228.80" font-size="23.43" fill="#f0f0f0" stroke="#f0f0f0" stroke-width="0.28"><tspan x="127.30" textLength="25.68" lengthAdjust="spacingAndGlyphs">dE</tspan> <tspan x="158.70" textLength="91.75" lengthAdjust="spacingAndGlyphs">Formula:</tspan></text>
<text x="265.90" y="229.60" font-size="19.79" fill="#f0f0f0" textLength="40.40" lengthAdjust="spacingAndGlyphs" stroke="#f0f0f0" stroke-width="0.24">2000</text>
<text y="266.00" font-size="17.27" fill="#dcdcdc" stroke="#dcdcdc" stroke-width="0.21"><tspan x="170.99" textLength="49.15" lengthAdjust="spacingAndGlyphs">DeltaE</tspan> <tspan x="224.36" textLength="37.85" lengthAdjust="spacingAndGlyphs">2000</tspan></text>
<text x="72.64" y="561.10" font-size="16.65" fill="#dcdcdc" textLength="9.12" lengthAdjust="spacingAndGlyphs" stroke="#dcdcdc" stroke-width="0.20">0</text>
<text x="116.64" y="561.10" font-size="16.65" fill="#dcdcdc" textLength="9.12" lengthAdjust="spacingAndGlyphs" stroke="#dcdcdc" stroke-width="0.20">2</text>
<text x="160.64" y="561.10" font-size="16.65" fill="#dcdcdc" textLength="9.12" lengthAdjust="spacingAndGlyphs" stroke="#dcdcdc" stroke-width="0.20">4</text>
<text x="204.64" y="561.10" font-size="16.65" fill="#dcdcdc" textLength="9.12" lengthAdjust="spacingAndGlyphs" stroke="#dcdcdc" stroke-width="0.20">6</text>
<text x="248.64" y="561.10" font-size="16.65" fill="#dcdcdc" textLength="9.12" lengthAdjust="spacingAndGlyphs" stroke="#dcdcdc" stroke-width="0.20">8</text>
<text x="288.08" y="561.10" font-size="16.65" fill="#dcdcdc" textLength="18.25" lengthAdjust="spacingAndGlyphs" stroke="#dcdcdc" stroke-width="0.20">10</text>
<text x="332.08" y="561.10" font-size="16.65" fill="#dcdcdc" textLength="18.25" lengthAdjust="spacingAndGlyphs" stroke="#dcdcdc" stroke-width="0.20">12</text>
<text x="376.08" y="561.10" font-size="16.65" fill="#dcdcdc" textLength="18.25" lengthAdjust="spacingAndGlyphs" stroke="#dcdcdc" stroke-width="0.20">14</text>
<text x="42.23" y="284.77" font-size="16.65" fill="#dcdcdc" textLength="27.37" lengthAdjust="spacingAndGlyphs" stroke="#dcdcdc" stroke-width="0.20">100</text>
<text x="23.15" y="297.30" font-size="16.65" fill="#dcdcdc" textLength="18.25" lengthAdjust="spacingAndGlyphs" stroke="#dcdcdc" stroke-width="0.20">95</text>
<text x="51.35" y="309.83" font-size="16.65" fill="#dcdcdc" textLength="18.25" lengthAdjust="spacingAndGlyphs" stroke="#dcdcdc" stroke-width="0.20">90</text>
<text x="23.15" y="322.37" font-size="16.65" fill="#dcdcdc" textLength="18.25" lengthAdjust="spacingAndGlyphs" stroke="#dcdcdc" stroke-width="0.20">85</text>
<text x="51.35" y="334.90" font-size="16.65" fill="#dcdcdc" textLength="18.25" lengthAdjust="spacingAndGlyphs" stroke="#dcdcdc" stroke-width="0.20">80</text>
<text x="23.15" y="347.43" font-size="16.65" fill="#dcdcdc" textLength="18.25" lengthAdjust="spacingAndGlyphs" stroke="#dcdcdc" stroke-width="0.20">75</text>
<text x="51.35" y="359.97" font-size="16.65" fill="#dcdcdc" textLength="18.25" lengthAdjust="spacingAndGlyphs" stroke="#dcdcdc" stroke-width="0.20">70</text>
<text x="23.15" y="372.50" font-size="16.65" fill="#dcdcdc" textLength="18.25" lengthAdjust="spacingAndGlyphs" stroke="#dcdcdc" stroke-width="0.20">65</text>
<text x="51.35" y="385.03" font-size="16.65" fill="#dcdcdc" textLength="18.25" lengthAdjust="spacingAndGlyphs" stroke="#dcdcdc" stroke-width="0.20">60</text>
<text x="23.15" y="397.57" font-size="16.65" fill="#dcdcdc" textLength="18.25" lengthAdjust="spacingAndGlyphs" stroke="#dcdcdc" stroke-width="0.20">55</text>
<text x="51.35" y="410.10" font-size="16.65" fill="#dcdcdc" textLength="18.25" lengthAdjust="spacingAndGlyphs" stroke="#dcdcdc" stroke-width="0.20">50</text>
<text x="23.15" y="422.63" font-size="16.65" fill="#dcdcdc" textLength="18.25" lengthAdjust="spacingAndGlyphs" stroke="#dcdcdc" stroke-width="0.20">45</text>
<text x="51.35" y="435.17" font-size="16.65" fill="#dcdcdc" textLength="18.25" lengthAdjust="spacingAndGlyphs" stroke="#dcdcdc" stroke-width="0.20">40</text>
<text x="23.15" y="447.70" font-size="16.65" fill="#dcdcdc" textLength="18.25" lengthAdjust="spacingAndGlyphs" stroke="#dcdcdc" stroke-width="0.20">35</text>
<text x="51.35" y="460.23" font-size="16.65" fill="#dcdcdc" textLength="18.25" lengthAdjust="spacingAndGlyphs" stroke="#dcdcdc" stroke-width="0.20">30</text>
<text x="23.15" y="472.77" font-size="16.65" fill="#dcdcdc" textLength="18.25" lengthAdjust="spacingAndGlyphs" stroke="#dcdcdc" stroke-width="0.20">25</text>
<text x="51.35" y="485.30" font-size="16.65" fill="#dcdcdc" textLength="18.25" lengthAdjust="spacingAndGlyphs" stroke="#dcdcdc" stroke-width="0.20">20</text>
<text x="23.15" y="497.83" font-size="16.65" fill="#dcdcdc" textLength="18.25" lengthAdjust="spacingAndGlyphs" stroke="#dcdcdc" stroke-width="0.20">15</text>
<text x="51.35" y="510.37" font-size="16.65" fill="#dcdcdc" textLength="18.25" lengthAdjust="spacingAndGlyphs" stroke="#dcdcdc" stroke-width="0.20">10</text>
<text x="32.28" y="522.90" font-size="16.65" fill="#dcdcdc" textLength="9.12" lengthAdjust="spacingAndGlyphs" stroke="#dcdcdc" stroke-width="0.20">5</text>
<text x="60.48" y="535.43" font-size="16.65" fill="#dcdcdc" textLength="9.12" lengthAdjust="spacingAndGlyphs" stroke="#dcdcdc" stroke-width="0.20">0</text>
<text y="163.60" font-size="17.27" fill="#dcdcdc" stroke="#dcdcdc" stroke-width="0.21"><tspan x="751.58" textLength="31.90" lengthAdjust="spacingAndGlyphs">RGB</tspan> <tspan x="787.70" textLength="59.32" lengthAdjust="spacingAndGlyphs">Balance</tspan></text>
<text x="463.35" y="506.40" font-size="16.65" fill="#dcdcdc" textLength="18.25" lengthAdjust="spacingAndGlyphs" stroke="#dcdcdc" stroke-width="0.20">96</text>
<text x="463.35" y="433.20" font-size="16.65" fill="#dcdcdc" textLength="18.25" lengthAdjust="spacingAndGlyphs" stroke="#dcdcdc" stroke-width="0.20">98</text>
<text x="454.23" y="360.00" font-size="16.65" fill="#dcdcdc" textLength="27.37" lengthAdjust="spacingAndGlyphs" stroke="#dcdcdc" stroke-width="0.20">100</text>
<text x="454.23" y="286.80" font-size="16.65" fill="#dcdcdc" textLength="27.37" lengthAdjust="spacingAndGlyphs" stroke="#dcdcdc" stroke-width="0.20">102</text>
<text x="454.23" y="213.60" font-size="16.65" fill="#dcdcdc" textLength="27.37" lengthAdjust="spacingAndGlyphs" stroke="#dcdcdc" stroke-width="0.20">104</text>
<text x="484.44" y="561.10" font-size="16.65" fill="#dcdcdc" textLength="9.12" lengthAdjust="spacingAndGlyphs" stroke="#dcdcdc" stroke-width="0.20">0</text>
<text x="545.44" y="561.10" font-size="16.65" fill="#dcdcdc" textLength="18.25" lengthAdjust="spacingAndGlyphs" stroke="#dcdcdc" stroke-width="0.20">10</text>
<text x="611.00" y="561.10" font-size="16.65" fill="#dcdcdc" textLength="18.25" lengthAdjust="spacingAndGlyphs" stroke="#dcdcdc" stroke-width="0.20">20</text>
<text x="676.56" y="561.10" font-size="16.65" fill="#dcdcdc" textLength="18.25" lengthAdjust="spacingAndGlyphs" stroke="#dcdcdc" stroke-width="0.20">30</text>
<text x="742.12" y="561.10" font-size="16.65" fill="#dcdcdc" textLength="18.25" lengthAdjust="spacingAndGlyphs" stroke="#dcdcdc" stroke-width="0.20">40</text>
<text x="807.68" y="561.10" font-size="16.65" fill="#dcdcdc" textLength="18.25" lengthAdjust="spacingAndGlyphs" stroke="#dcdcdc" stroke-width="0.20">50</text>
<text x="873.24" y="561.10" font-size="16.65" fill="#dcdcdc" textLength="18.25" lengthAdjust="spacingAndGlyphs" stroke="#dcdcdc" stroke-width="0.20">60</text>
<text x="938.80" y="561.10" font-size="16.65" fill="#dcdcdc" textLength="18.25" lengthAdjust="spacingAndGlyphs" stroke="#dcdcdc" stroke-width="0.20">70</text>
<text x="1004.36" y="561.10" font-size="16.65" fill="#dcdcdc" textLength="18.25" lengthAdjust="spacingAndGlyphs" stroke="#dcdcdc" stroke-width="0.20">80</text>
<text x="1069.92" y="561.10" font-size="16.65" fill="#dcdcdc" textLength="18.25" lengthAdjust="spacingAndGlyphs" stroke="#dcdcdc" stroke-width="0.20">90</text>
<text x="1130.92" y="561.10" font-size="16.65" fill="#dcdcdc" textLength="27.37" lengthAdjust="spacingAndGlyphs" stroke="#dcdcdc" stroke-width="0.20">100</text>
<text y="163.60" font-size="17.27" fill="#dcdcdc" stroke="#dcdcdc" stroke-width="0.21"><tspan x="1225.38" textLength="31.90" lengthAdjust="spacingAndGlyphs">RGB</tspan> <tspan x="1261.50" textLength="59.32" lengthAdjust="spacingAndGlyphs">Balance</tspan></text>
<text x="1191.35" y="512.60" font-size="16.65" fill="#dcdcdc" textLength="18.25" lengthAdjust="spacingAndGlyphs" stroke="#dcdcdc" stroke-width="0.20">96</text>
<text x="1191.35" y="438.20" font-size="16.65" fill="#dcdcdc" textLength="18.25" lengthAdjust="spacingAndGlyphs" stroke="#dcdcdc" stroke-width="0.20">98</text>
<text x="1182.23" y="363.80" font-size="16.65" fill="#dcdcdc" textLength="27.37" lengthAdjust="spacingAndGlyphs" stroke="#dcdcdc" stroke-width="0.20">100</text>
<text x="1182.23" y="289.40" font-size="16.65" fill="#dcdcdc" textLength="27.37" lengthAdjust="spacingAndGlyphs" stroke="#dcdcdc" stroke-width="0.20">102</text>
<text x="1182.23" y="215.00" font-size="16.65" fill="#dcdcdc" textLength="27.37" lengthAdjust="spacingAndGlyphs" stroke="#dcdcdc" stroke-width="0.20">104</text>
<text x="1276.32" y="561.10" font-size="16.65" fill="#dcdcdc" textLength="27.37" lengthAdjust="spacingAndGlyphs" stroke="#dcdcdc" stroke-width="0.20">100</text>
<text y="163.60" font-size="17.27" fill="#dcdcdc" stroke="#dcdcdc" stroke-width="0.21"><tspan x="1582.32" textLength="59.49" lengthAdjust="spacingAndGlyphs">Gamma</tspan> <tspan x="1646.04" textLength="60.84" lengthAdjust="spacingAndGlyphs">Log/Log</tspan></text>
<text x="1401.16" y="543.40" font-size="16.65" fill="#dcdcdc" textLength="22.74" lengthAdjust="spacingAndGlyphs" stroke="#dcdcdc" stroke-width="0.20">1,8</text>
<text x="1414.78" y="470.20" font-size="16.65" fill="#dcdcdc" textLength="9.12" lengthAdjust="spacingAndGlyphs" stroke="#dcdcdc" stroke-width="0.20">2</text>
<text x="1401.16" y="397.00" font-size="16.65" fill="#dcdcdc" textLength="22.74" lengthAdjust="spacingAndGlyphs" stroke="#dcdcdc" stroke-width="0.20">2,2</text>
<text x="1401.16" y="323.80" font-size="16.65" fill="#dcdcdc" textLength="22.74" lengthAdjust="spacingAndGlyphs" stroke="#dcdcdc" stroke-width="0.20">2,4</text>
<text x="1401.16" y="250.60" font-size="16.65" fill="#dcdcdc" textLength="22.74" lengthAdjust="spacingAndGlyphs" stroke="#dcdcdc" stroke-width="0.20">2,6</text>
<text x="1401.16" y="177.40" font-size="16.65" fill="#dcdcdc" textLength="22.74" lengthAdjust="spacingAndGlyphs" stroke="#dcdcdc" stroke-width="0.20">2,8</text>
<text x="1427.44" y="561.10" font-size="16.65" fill="#dcdcdc" textLength="9.12" lengthAdjust="spacingAndGlyphs" stroke="#dcdcdc" stroke-width="0.20">0</text>
<text x="1514.16" y="561.10" font-size="16.65" fill="#dcdcdc" textLength="18.25" lengthAdjust="spacingAndGlyphs" stroke="#dcdcdc" stroke-width="0.20">20</text>
<text x="1605.44" y="561.10" font-size="16.65" fill="#dcdcdc" textLength="18.25" lengthAdjust="spacingAndGlyphs" stroke="#dcdcdc" stroke-width="0.20">40</text>
<text x="1696.72" y="561.10" font-size="16.65" fill="#dcdcdc" textLength="18.25" lengthAdjust="spacingAndGlyphs" stroke="#dcdcdc" stroke-width="0.20">60</text>
<text x="1788.00" y="561.10" font-size="16.65" fill="#dcdcdc" textLength="18.25" lengthAdjust="spacingAndGlyphs" stroke="#dcdcdc" stroke-width="0.20">80</text>
<text x="1874.72" y="561.10" font-size="16.65" fill="#dcdcdc" textLength="27.37" lengthAdjust="spacingAndGlyphs" stroke="#dcdcdc" stroke-width="0.20">100</text>
<text y="608.50" font-size="35.43" fill="#f2f2f2" stroke="#f2f2f2" stroke-width="0.42"><tspan x="100.00" textLength="56.25" lengthAdjust="spacingAndGlyphs">Avg</tspan> <tspan x="164.91" textLength="126.72" lengthAdjust="spacingAndGlyphs">dE2000:</tspan> <tspan x="300.29" textLength="48.38" lengthAdjust="spacingAndGlyphs">0,3</tspan></text>
<text y="608.50" font-size="35.43" fill="#f2f2f2" stroke="#f2f2f2" stroke-width="0.42"><tspan x="572.60" textLength="56.25" lengthAdjust="spacingAndGlyphs">Avg</tspan> <tspan x="637.51" textLength="67.44" lengthAdjust="spacingAndGlyphs">CCT:</tspan> <tspan x="713.61" textLength="77.65" lengthAdjust="spacingAndGlyphs">6437</tspan></text>
<text y="608.50" font-size="35.43" fill="#f2f2f2" clip-path="url(#clipCR)" stroke="#f2f2f2" stroke-width="0.42"><tspan x="929.00" textLength="131.51" lengthAdjust="spacingAndGlyphs">Contrast</tspan> <tspan x="1069.17" textLength="90.57" lengthAdjust="spacingAndGlyphs">Ratio:</tspan> <tspan x="1168.39" textLength="232.95" lengthAdjust="spacingAndGlyphs">382271616073</tspan></text>
<text y="608.50" font-size="35.43" fill="#f2f2f2" stroke="#f2f2f2" stroke-width="0.42"><tspan x="1464.00" textLength="125.11" lengthAdjust="spacingAndGlyphs">Average</tspan> <tspan x="1597.77" textLength="132.29" lengthAdjust="spacingAndGlyphs">Gamma:</tspan> <tspan x="1738.72" textLength="87.20" lengthAdjust="spacingAndGlyphs">2,403</tspan></text>
<text x="163.45" y="772.80" font-size="14.80" fill="#e6e6e6" textLength="8.11" lengthAdjust="spacingAndGlyphs" stroke="#e6e6e6" stroke-width="0.18">0</text>
<text x="248.07" y="772.80" font-size="14.80" fill="#e6e6e6" textLength="8.11" lengthAdjust="spacingAndGlyphs" stroke="#e6e6e6" stroke-width="0.18">5</text>
<text x="328.64" y="772.80" font-size="14.80" fill="#e6e6e6" textLength="16.22" lengthAdjust="spacingAndGlyphs" stroke="#e6e6e6" stroke-width="0.18">10</text>
<text x="413.27" y="772.80" font-size="14.80" fill="#e6e6e6" textLength="16.22" lengthAdjust="spacingAndGlyphs" stroke="#e6e6e6" stroke-width="0.18">15</text>
<text x="497.89" y="772.80" font-size="14.80" fill="#e6e6e6" textLength="16.22" lengthAdjust="spacingAndGlyphs" stroke="#e6e6e6" stroke-width="0.18">20</text>
<text x="582.52" y="772.80" font-size="14.80" fill="#e6e6e6" textLength="16.22" lengthAdjust="spacingAndGlyphs" stroke="#e6e6e6" stroke-width="0.18">25</text>
<text x="667.14" y="772.80" font-size="14.80" fill="#e6e6e6" textLength="16.22" lengthAdjust="spacingAndGlyphs" stroke="#e6e6e6" stroke-width="0.18">30</text>
<text x="751.77" y="772.80" font-size="14.80" fill="#e6e6e6" textLength="16.22" lengthAdjust="spacingAndGlyphs" stroke="#e6e6e6" stroke-width="0.18">35</text>
<text x="836.39" y="772.80" font-size="14.80" fill="#e6e6e6" textLength="16.22" lengthAdjust="spacingAndGlyphs" stroke="#e6e6e6" stroke-width="0.18">40</text>
<text x="921.02" y="772.80" font-size="14.80" fill="#e6e6e6" textLength="16.22" lengthAdjust="spacingAndGlyphs" stroke="#e6e6e6" stroke-width="0.18">45</text>
<text x="1005.64" y="772.80" font-size="14.80" fill="#e6e6e6" textLength="16.22" lengthAdjust="spacingAndGlyphs" stroke="#e6e6e6" stroke-width="0.18">50</text>
<text x="1090.27" y="772.80" font-size="14.80" fill="#e6e6e6" textLength="16.22" lengthAdjust="spacingAndGlyphs" stroke="#e6e6e6" stroke-width="0.18">55</text>
<text x="1174.89" y="772.80" font-size="14.80" fill="#e6e6e6" textLength="16.22" lengthAdjust="spacingAndGlyphs" stroke="#e6e6e6" stroke-width="0.18">60</text>
<text x="1259.52" y="772.80" font-size="14.80" fill="#e6e6e6" textLength="16.22" lengthAdjust="spacingAndGlyphs" stroke="#e6e6e6" stroke-width="0.18">65</text>
<text x="1344.14" y="772.80" font-size="14.80" fill="#e6e6e6" textLength="16.22" lengthAdjust="spacingAndGlyphs" stroke="#e6e6e6" stroke-width="0.18">70</text>
<text x="1428.77" y="772.80" font-size="14.80" fill="#e6e6e6" textLength="16.22" lengthAdjust="spacingAndGlyphs" stroke="#e6e6e6" stroke-width="0.18">75</text>
<text x="1513.39" y="772.80" font-size="14.80" fill="#e6e6e6" textLength="16.22" lengthAdjust="spacingAndGlyphs" stroke="#e6e6e6" stroke-width="0.18">80</text>
<text x="1598.02" y="772.80" font-size="14.80" fill="#e6e6e6" textLength="16.22" lengthAdjust="spacingAndGlyphs" stroke="#e6e6e6" stroke-width="0.18">85</text>
<text x="1682.64" y="772.80" font-size="14.80" fill="#e6e6e6" textLength="16.22" lengthAdjust="spacingAndGlyphs" stroke="#e6e6e6" stroke-width="0.18">90</text>
<text x="1767.27" y="772.80" font-size="14.80" fill="#e6e6e6" textLength="16.22" lengthAdjust="spacingAndGlyphs" stroke="#e6e6e6" stroke-width="0.18">95</text>
<text x="1847.84" y="772.80" font-size="14.80" fill="#e6e6e6" textLength="24.33" lengthAdjust="spacingAndGlyphs" stroke="#e6e6e6" stroke-width="0.18">100</text>
<text transform="translate(126.3 683.8) rotate(-90)" font-size="14.8" fill="#e6e6e6" textLength="39.3" lengthAdjust="spacingAndGlyphs">Actual</text>
<text transform="translate(126.3 750.2) rotate(-90)" font-size="14.8" fill="#e6e6e6" textLength="40" lengthAdjust="spacingAndGlyphs">Target</text>
<text y="858.70" font-size="35.52" fill="#f0f0f0" stroke="#f0f0f0" stroke-width="0.42"><tspan x="24.60" textLength="118.57" lengthAdjust="spacingAndGlyphs">Current</tspan> <tspan x="151.84" textLength="124.76" lengthAdjust="spacingAndGlyphs">Reading</tspan></text>
<text y="908.00" font-size="29.60" fill="#f0f0f0" stroke="#f0f0f0" stroke-width="0.35"><tspan x="25.00" textLength="22.42" lengthAdjust="spacingAndGlyphs">x:</tspan> <tspan x="54.66" textLength="89.08" lengthAdjust="spacingAndGlyphs">0,3129</tspan></text>
<text y="908.00" font-size="29.60" fill="#f0f0f0" stroke="#f0f0f0" stroke-width="0.35"><tspan x="197.00" textLength="23.05" lengthAdjust="spacingAndGlyphs">y:</tspan> <tspan x="227.28" textLength="89.08" lengthAdjust="spacingAndGlyphs">0,3285</tspan></text>
<text y="947.30" font-size="29.60" fill="#f0f0f0" stroke="#f0f0f0" stroke-width="0.35"><tspan x="25.00" textLength="32.44" lengthAdjust="spacingAndGlyphs">u':</tspan> <tspan x="64.67" textLength="89.08" lengthAdjust="spacingAndGlyphs">0,1982</tspan></text>
<text y="947.30" font-size="29.60" fill="#f0f0f0" stroke="#f0f0f0" stroke-width="0.35"><tspan x="197.00" textLength="30.08" lengthAdjust="spacingAndGlyphs">v':</tspan> <tspan x="234.31" textLength="89.08" lengthAdjust="spacingAndGlyphs">0,4681</tspan></text>
<text y="986.50" font-size="29.60" fill="#f0f0f0" stroke="#f0f0f0" stroke-width="0.35"><tspan x="25.00" textLength="87.58" lengthAdjust="spacingAndGlyphs">cd/m²:</tspan> <tspan x="119.81" textLength="121.52" lengthAdjust="spacingAndGlyphs">382,2716</tspan></text>
<text y="1025.20" font-size="29.60" fill="#f0f0f0" stroke="#f0f0f0" stroke-width="0.35"><tspan x="25.00" textLength="33.69" lengthAdjust="spacingAndGlyphs">ΔE</tspan> <tspan x="65.92" textLength="73.44" lengthAdjust="spacingAndGlyphs">2000:</tspan> <tspan x="146.59" textLength="56.64" lengthAdjust="spacingAndGlyphs">0,54</tspan></text>
<text y="820.50" font-size="17.27" fill="#dcdcdc" stroke="#dcdcdc" stroke-width="0.21"><tspan x="501.70" textLength="23.78" lengthAdjust="spacingAndGlyphs">CIE</tspan> <tspan x="529.69" textLength="37.85" lengthAdjust="spacingAndGlyphs">1931</tspan> <tspan x="571.77" textLength="16.54" lengthAdjust="spacingAndGlyphs">xy</tspan></text>
<text x="380.54" y="886.30" font-size="16.65" fill="#dcdcdc" textLength="31.86" lengthAdjust="spacingAndGlyphs" stroke="#dcdcdc" stroke-width="0.20">0,34</text>
<text x="380.54" y="962.80" font-size="16.65" fill="#dcdcdc" textLength="31.86" lengthAdjust="spacingAndGlyphs" stroke="#dcdcdc" stroke-width="0.20">0,32</text>
<text x="416.87" y="1041.30" font-size="16.65" fill="#dcdcdc" textLength="31.86" lengthAdjust="spacingAndGlyphs" stroke="#dcdcdc" stroke-width="0.20">0,29</text>
<text x="479.33" y="1041.30" font-size="16.65" fill="#dcdcdc" textLength="22.74" lengthAdjust="spacingAndGlyphs" stroke="#dcdcdc" stroke-width="0.20">0,3</text>
<text x="532.57" y="1041.30" font-size="16.65" fill="#dcdcdc" textLength="31.86" lengthAdjust="spacingAndGlyphs" stroke="#dcdcdc" stroke-width="0.20">0,31</text>
<text x="590.67" y="1041.30" font-size="16.65" fill="#dcdcdc" textLength="31.86" lengthAdjust="spacingAndGlyphs" stroke="#dcdcdc" stroke-width="0.20">0,32</text>
<text x="648.57" y="1041.30" font-size="16.65" fill="#dcdcdc" textLength="31.86" lengthAdjust="spacingAndGlyphs" stroke="#dcdcdc" stroke-width="0.20">0,33</text>
<text x="733.60" y="841.60" font-size="16.00" fill="#f4f4f4" font-weight="bold" textLength="54.80" lengthAdjust="spacingAndGlyphs" stroke="#f4f4f4" stroke-width="0.3">x: CIE31</text>
<text x="866.20" y="841.60" font-size="16.00" fill="#f4f4f4" textLength="43.65" lengthAdjust="spacingAndGlyphs" clip-path="url(#clipTab)">0,3333</text>
<text x="941.80" y="841.60" font-size="16.00" fill="#f4f4f4" textLength="43.65" lengthAdjust="spacingAndGlyphs" clip-path="url(#clipTab)">0,3271</text>
<text x="1017.40" y="841.60" font-size="16.00" fill="#f4f4f4" textLength="43.65" lengthAdjust="spacingAndGlyphs" clip-path="url(#clipTab)">0,3181</text>
<text x="1093.00" y="841.60" font-size="16.00" fill="#f4f4f4" textLength="43.65" lengthAdjust="spacingAndGlyphs" clip-path="url(#clipTab)">0,3136</text>
<text x="1168.60" y="841.60" font-size="16.00" fill="#f4f4f4" textLength="43.65" lengthAdjust="spacingAndGlyphs" clip-path="url(#clipTab)">0,3136</text>
<text x="1244.20" y="841.60" font-size="16.00" fill="#f4f4f4" textLength="43.65" lengthAdjust="spacingAndGlyphs" clip-path="url(#clipTab)">0,3132</text>
<text x="1319.80" y="841.60" font-size="16.00" fill="#f4f4f4" textLength="43.65" lengthAdjust="spacingAndGlyphs" clip-path="url(#clipTab)">0,3125</text>
<text x="1395.40" y="841.60" font-size="16.00" fill="#f4f4f4" textLength="43.65" lengthAdjust="spacingAndGlyphs" clip-path="url(#clipTab)">0,3126</text>
<text x="1471.00" y="841.60" font-size="16.00" fill="#f4f4f4" textLength="43.65" lengthAdjust="spacingAndGlyphs" clip-path="url(#clipTab)">0,3132</text>
<text x="1546.60" y="841.60" font-size="16.00" fill="#f4f4f4" textLength="43.65" lengthAdjust="spacingAndGlyphs" clip-path="url(#clipTab)">0,3133</text>
<text x="1622.20" y="841.60" font-size="16.00" fill="#f4f4f4" textLength="43.65" lengthAdjust="spacingAndGlyphs" clip-path="url(#clipTab)">0,3129</text>
<text x="1697.80" y="841.60" font-size="16.00" fill="#f4f4f4" textLength="43.65" lengthAdjust="spacingAndGlyphs" clip-path="url(#clipTab)">0,3126</text>
<text x="1773.40" y="841.60" font-size="16.00" fill="#f4f4f4" textLength="43.65" lengthAdjust="spacingAndGlyphs" clip-path="url(#clipTab)">0,3125</text>
<text x="1849.00" y="841.60" font-size="16.00" fill="#f4f4f4" textLength="43.65" lengthAdjust="spacingAndGlyphs" clip-path="url(#clipTab)">0,3128</text>
<text x="733.60" y="868.37" font-size="16.00" fill="#f4f4f4" font-weight="bold" textLength="54.80" lengthAdjust="spacingAndGlyphs" stroke="#f4f4f4" stroke-width="0.3">y: CIE31</text>
<text x="866.20" y="868.37" font-size="16.00" fill="#f4f4f4" textLength="43.65" lengthAdjust="spacingAndGlyphs" clip-path="url(#clipTab)">0,3333</text>
<text x="941.80" y="868.37" font-size="16.00" fill="#f4f4f4" textLength="43.65" lengthAdjust="spacingAndGlyphs" clip-path="url(#clipTab)">0,3247</text>
<text x="1017.40" y="868.37" font-size="16.00" fill="#f4f4f4" textLength="43.65" lengthAdjust="spacingAndGlyphs" clip-path="url(#clipTab)">0,3305</text>
<text x="1093.00" y="868.37" font-size="16.00" fill="#f4f4f4" textLength="43.65" lengthAdjust="spacingAndGlyphs" clip-path="url(#clipTab)">0,3299</text>
<text x="1168.60" y="868.37" font-size="16.00" fill="#f4f4f4" textLength="43.65" lengthAdjust="spacingAndGlyphs" clip-path="url(#clipTab)">0,3287</text>
<text x="1244.20" y="868.37" font-size="16.00" fill="#f4f4f4" textLength="43.65" lengthAdjust="spacingAndGlyphs" clip-path="url(#clipTab)">0,3298</text>
<text x="1319.80" y="868.37" font-size="16.00" fill="#f4f4f4" textLength="43.65" lengthAdjust="spacingAndGlyphs" clip-path="url(#clipTab)">0,3298</text>
<text x="1395.40" y="868.37" font-size="16.00" fill="#f4f4f4" textLength="43.65" lengthAdjust="spacingAndGlyphs" clip-path="url(#clipTab)">0,3294</text>
<text x="1471.00" y="868.37" font-size="16.00" fill="#f4f4f4" textLength="43.65" lengthAdjust="spacingAndGlyphs" clip-path="url(#clipTab)">0,3294</text>
<text x="1546.60" y="868.37" font-size="16.00" fill="#f4f4f4" textLength="43.65" lengthAdjust="spacingAndGlyphs" clip-path="url(#clipTab)">0,3294</text>
<text x="1622.20" y="868.37" font-size="16.00" fill="#f4f4f4" textLength="43.65" lengthAdjust="spacingAndGlyphs" clip-path="url(#clipTab)">0,3296</text>
<text x="1697.80" y="868.37" font-size="16.00" fill="#f4f4f4" textLength="43.65" lengthAdjust="spacingAndGlyphs" clip-path="url(#clipTab)">0,3289</text>
<text x="1773.40" y="868.37" font-size="16.00" fill="#f4f4f4" textLength="43.65" lengthAdjust="spacingAndGlyphs" clip-path="url(#clipTab)">0,3290</text>
<text x="1849.00" y="868.37" font-size="16.00" fill="#f4f4f4" textLength="43.65" lengthAdjust="spacingAndGlyphs" clip-path="url(#clipTab)">0,3283</text>
<text x="733.60" y="895.14" font-size="16.00" fill="#f4f4f4" font-weight="bold" textLength="8.60" lengthAdjust="spacingAndGlyphs" stroke="#f4f4f4" stroke-width="0.3">Y</text>
<text x="866.20" y="895.14" font-size="16.00" fill="#f4f4f4" textLength="43.65" lengthAdjust="spacingAndGlyphs" clip-path="url(#clipTab)">0,0000</text>
<text x="941.80" y="895.14" font-size="16.00" fill="#f4f4f4" textLength="43.65" lengthAdjust="spacingAndGlyphs" clip-path="url(#clipTab)">0,2917</text>
<text x="1017.40" y="895.14" font-size="16.00" fill="#f4f4f4" textLength="43.65" lengthAdjust="spacingAndGlyphs" clip-path="url(#clipTab)">1,5828</text>
<text x="1093.00" y="895.14" font-size="16.00" fill="#f4f4f4" textLength="43.65" lengthAdjust="spacingAndGlyphs" clip-path="url(#clipTab)">3,9161</text>
<text x="1168.60" y="895.14" font-size="16.00" fill="#f4f4f4" textLength="43.65" lengthAdjust="spacingAndGlyphs" clip-path="url(#clipTab)">8,1275</text>
<text x="1244.20" y="895.14" font-size="16.00" fill="#f4f4f4" textLength="51.70" lengthAdjust="spacingAndGlyphs" clip-path="url(#clipTab)">13,7553</text>
<text x="1319.80" y="895.14" font-size="16.00" fill="#f4f4f4" textLength="51.70" lengthAdjust="spacingAndGlyphs" clip-path="url(#clipTab)">20,6288</text>
<text x="1395.40" y="895.14" font-size="16.00" fill="#f4f4f4" textLength="51.70" lengthAdjust="spacingAndGlyphs" clip-path="url(#clipTab)">30,2010</text>
<text x="1471.00" y="895.14" font-size="16.00" fill="#f4f4f4" textLength="51.70" lengthAdjust="spacingAndGlyphs" clip-path="url(#clipTab)">42,5307</text>
<text x="1546.60" y="895.14" font-size="16.00" fill="#f4f4f4" textLength="51.70" lengthAdjust="spacingAndGlyphs" clip-path="url(#clipTab)">57,0712</text>
<text x="1622.20" y="895.14" font-size="16.00" fill="#f4f4f4" textLength="51.70" lengthAdjust="spacingAndGlyphs" clip-path="url(#clipTab)">73,4725</text>
<text x="1697.80" y="895.14" font-size="16.00" fill="#f4f4f4" textLength="51.70" lengthAdjust="spacingAndGlyphs" clip-path="url(#clipTab)">90,5567</text>
<text x="1773.40" y="895.14" font-size="16.00" fill="#f4f4f4" textLength="59.75" lengthAdjust="spacingAndGlyphs" clip-path="url(#clipTab)">111,7358</text>
<text x="1849.00" y="895.14" font-size="16.00" fill="#f4f4f4" textLength="59.75" lengthAdjust="spacingAndGlyphs" clip-path="url(#clipTab)">135,3868</text>
<text x="733.60" y="921.91" font-size="16.00" fill="#f4f4f4" font-weight="bold" textLength="57.50" lengthAdjust="spacingAndGlyphs" stroke="#f4f4f4" stroke-width="0.3">Target Y</text>
<text x="866.20" y="921.91" font-size="16.00" fill="#f4f4f4" textLength="43.65" lengthAdjust="spacingAndGlyphs" clip-path="url(#clipTab)">0,0000</text>
<text x="941.80" y="921.91" font-size="16.00" fill="#f4f4f4" textLength="43.65" lengthAdjust="spacingAndGlyphs" clip-path="url(#clipTab)">0,3021</text>
<text x="1017.40" y="921.91" font-size="16.00" fill="#f4f4f4" textLength="43.65" lengthAdjust="spacingAndGlyphs" clip-path="url(#clipTab)">1,5945</text>
<text x="1093.00" y="921.91" font-size="16.00" fill="#f4f4f4" textLength="43.65" lengthAdjust="spacingAndGlyphs" clip-path="url(#clipTab)">3,9643</text>
<text x="1168.60" y="921.91" font-size="16.00" fill="#f4f4f4" textLength="43.65" lengthAdjust="spacingAndGlyphs" clip-path="url(#clipTab)">8,0325</text>
<text x="1244.20" y="921.91" font-size="16.00" fill="#f4f4f4" textLength="51.70" lengthAdjust="spacingAndGlyphs" clip-path="url(#clipTab)">13,8521</text>
<text x="1319.80" y="921.91" font-size="16.00" fill="#f4f4f4" textLength="51.70" lengthAdjust="spacingAndGlyphs" clip-path="url(#clipTab)">20,9235</text>
<text x="1395.40" y="921.91" font-size="16.00" fill="#f4f4f4" textLength="51.70" lengthAdjust="spacingAndGlyphs" clip-path="url(#clipTab)">30,5644</text>
<text x="1471.00" y="921.91" font-size="16.00" fill="#f4f4f4" textLength="51.70" lengthAdjust="spacingAndGlyphs" clip-path="url(#clipTab)">42,3955</text>
<text x="1546.60" y="921.91" font-size="16.00" fill="#f4f4f4" textLength="51.70" lengthAdjust="spacingAndGlyphs" clip-path="url(#clipTab)">56,5397</text>
<text x="1622.20" y="921.91" font-size="16.00" fill="#f4f4f4" textLength="51.70" lengthAdjust="spacingAndGlyphs" clip-path="url(#clipTab)">73,1108</text>
<text x="1697.80" y="921.91" font-size="16.00" fill="#f4f4f4" textLength="51.70" lengthAdjust="spacingAndGlyphs" clip-path="url(#clipTab)">90,6535</text>
<text x="1773.40" y="921.91" font-size="16.00" fill="#f4f4f4" textLength="59.75" lengthAdjust="spacingAndGlyphs" clip-path="url(#clipTab)">112,1855</text>
<text x="1849.00" y="921.91" font-size="16.00" fill="#f4f4f4" textLength="59.75" lengthAdjust="spacingAndGlyphs" clip-path="url(#clipTab)">136,4383</text>
<text x="733.60" y="948.68" font-size="16.00" fill="#f4f4f4" font-weight="bold" textLength="117.00" lengthAdjust="spacingAndGlyphs" stroke="#f4f4f4" stroke-width="0.3">Gamma Log/Log</text>
<text x="866.20" y="948.68" font-size="16.00" fill="#f4f4f4" textLength="43.65" lengthAdjust="spacingAndGlyphs" clip-path="url(#clipTab)">2,3944</text>
<text x="941.80" y="948.68" font-size="16.00" fill="#f4f4f4" textLength="43.65" lengthAdjust="spacingAndGlyphs" clip-path="url(#clipTab)">2,4118</text>
<text x="1017.40" y="948.68" font-size="16.00" fill="#f4f4f4" textLength="43.65" lengthAdjust="spacingAndGlyphs" clip-path="url(#clipTab)">2,4032</text>
<text x="1093.00" y="948.68" font-size="16.00" fill="#f4f4f4" textLength="43.65" lengthAdjust="spacingAndGlyphs" clip-path="url(#clipTab)">2,4064</text>
<text x="1168.60" y="948.68" font-size="16.00" fill="#f4f4f4" textLength="43.65" lengthAdjust="spacingAndGlyphs" clip-path="url(#clipTab)">2,3927</text>
<text x="1244.20" y="948.68" font-size="16.00" fill="#f4f4f4" textLength="43.65" lengthAdjust="spacingAndGlyphs" clip-path="url(#clipTab)">2,4051</text>
<text x="1319.80" y="948.68" font-size="16.00" fill="#f4f4f4" textLength="43.65" lengthAdjust="spacingAndGlyphs" clip-path="url(#clipTab)">2,4117</text>
<text x="1395.40" y="948.68" font-size="16.00" fill="#f4f4f4" textLength="43.65" lengthAdjust="spacingAndGlyphs" clip-path="url(#clipTab)">2,4114</text>
<text x="1471.00" y="948.68" font-size="16.00" fill="#f4f4f4" textLength="43.65" lengthAdjust="spacingAndGlyphs" clip-path="url(#clipTab)">2,3965</text>
<text x="1546.60" y="948.68" font-size="16.00" fill="#f4f4f4" textLength="43.65" lengthAdjust="spacingAndGlyphs" clip-path="url(#clipTab)">2,3882</text>
<text x="1622.20" y="948.68" font-size="16.00" fill="#f4f4f4" textLength="43.65" lengthAdjust="spacingAndGlyphs" clip-path="url(#clipTab)">2,3928</text>
<text x="1697.80" y="948.68" font-size="16.00" fill="#f4f4f4" textLength="43.65" lengthAdjust="spacingAndGlyphs" clip-path="url(#clipTab)">2,4018</text>
<text x="1773.40" y="948.68" font-size="16.00" fill="#f4f4f4" textLength="43.65" lengthAdjust="spacingAndGlyphs" clip-path="url(#clipTab)">2,4079</text>
<text x="1849.00" y="948.68" font-size="16.00" fill="#f4f4f4" textLength="43.65" lengthAdjust="spacingAndGlyphs" clip-path="url(#clipTab)">2,4180</text>
<text x="733.60" y="975.45" font-size="16.00" fill="#f4f4f4" font-weight="bold" textLength="26.30" lengthAdjust="spacingAndGlyphs" stroke="#f4f4f4" stroke-width="0.3">CCT</text>
<text x="866.20" y="975.45" font-size="16.00" fill="#f4f4f4" textLength="67.80" lengthAdjust="spacingAndGlyphs" clip-path="url(#clipTab)">5456,0000</text>
<text x="941.80" y="975.45" font-size="16.00" fill="#f4f4f4" textLength="67.80" lengthAdjust="spacingAndGlyphs" clip-path="url(#clipTab)">5763,0000</text>
<text x="1017.40" y="975.45" font-size="16.00" fill="#f4f4f4" textLength="67.80" lengthAdjust="spacingAndGlyphs" clip-path="url(#clipTab)">6209,0000</text>
<text x="1093.00" y="975.45" font-size="16.00" fill="#f4f4f4" textLength="67.80" lengthAdjust="spacingAndGlyphs" clip-path="url(#clipTab)">6448,0000</text>
<text x="1168.60" y="975.45" font-size="16.00" fill="#f4f4f4" textLength="67.80" lengthAdjust="spacingAndGlyphs" clip-path="url(#clipTab)">6458,0000</text>
<text x="1244.20" y="975.45" font-size="16.00" fill="#f4f4f4" textLength="67.80" lengthAdjust="spacingAndGlyphs" clip-path="url(#clipTab)">6472,0000</text>
<text x="1319.80" y="975.45" font-size="16.00" fill="#f4f4f4" textLength="67.80" lengthAdjust="spacingAndGlyphs" clip-path="url(#clipTab)">6507,0000</text>
<text x="1395.40" y="975.45" font-size="16.00" fill="#f4f4f4" textLength="67.80" lengthAdjust="spacingAndGlyphs" clip-path="url(#clipTab)">6509,0000</text>
<text x="1471.00" y="975.45" font-size="16.00" fill="#f4f4f4" textLength="67.80" lengthAdjust="spacingAndGlyphs" clip-path="url(#clipTab)">6472,0000</text>
<text x="1546.60" y="975.45" font-size="16.00" fill="#f4f4f4" textLength="67.80" lengthAdjust="spacingAndGlyphs" clip-path="url(#clipTab)">6470,0000</text>
<text x="1622.20" y="975.45" font-size="16.00" fill="#f4f4f4" textLength="67.80" lengthAdjust="spacingAndGlyphs" clip-path="url(#clipTab)">6489,0000</text>
<text x="1697.80" y="975.45" font-size="16.00" fill="#f4f4f4" textLength="67.80" lengthAdjust="spacingAndGlyphs" clip-path="url(#clipTab)">6508,0000</text>
<text x="1773.40" y="975.45" font-size="16.00" fill="#f4f4f4" textLength="67.80" lengthAdjust="spacingAndGlyphs" clip-path="url(#clipTab)">6515,0000</text>
<text x="1849.00" y="975.45" font-size="16.00" fill="#f4f4f4" textLength="67.80" lengthAdjust="spacingAndGlyphs" clip-path="url(#clipTab)">6504,0000</text>
<text x="733.60" y="1002.22" font-size="16.00" fill="#f4f4f4" font-weight="bold" textLength="57.00" lengthAdjust="spacingAndGlyphs" stroke="#f4f4f4" stroke-width="0.3">ΔE 2000</text>
<text x="866.20" y="1002.22" font-size="16.00" fill="#f4f4f4" textLength="43.65" lengthAdjust="spacingAndGlyphs" clip-path="url(#clipTab)">0,0000</text>
<text x="941.80" y="1002.22" font-size="16.00" fill="#f4f4f4" textLength="43.65" lengthAdjust="spacingAndGlyphs" clip-path="url(#clipTab)">0,2668</text>
<text x="1017.40" y="1002.22" font-size="16.00" fill="#f4f4f4" textLength="43.65" lengthAdjust="spacingAndGlyphs" clip-path="url(#clipTab)">0,3392</text>
<text x="1093.00" y="1002.22" font-size="16.00" fill="#f4f4f4" textLength="43.65" lengthAdjust="spacingAndGlyphs" clip-path="url(#clipTab)">0,1304</text>
<text x="1168.60" y="1002.22" font-size="16.00" fill="#f4f4f4" textLength="43.65" lengthAdjust="spacingAndGlyphs" clip-path="url(#clipTab)">0,2628</text>
<text x="1244.20" y="1002.22" font-size="16.00" fill="#f4f4f4" textLength="43.65" lengthAdjust="spacingAndGlyphs" clip-path="url(#clipTab)">0,1599</text>
<text x="1319.80" y="1002.22" font-size="16.00" fill="#f4f4f4" textLength="43.65" lengthAdjust="spacingAndGlyphs" clip-path="url(#clipTab)">0,3218</text>
<text x="1395.40" y="1002.22" font-size="16.00" fill="#f4f4f4" textLength="43.65" lengthAdjust="spacingAndGlyphs" clip-path="url(#clipTab)">0,2360</text>
<text x="1471.00" y="1002.22" font-size="16.00" fill="#f4f4f4" textLength="43.65" lengthAdjust="spacingAndGlyphs" clip-path="url(#clipTab)">0,1462</text>
<text x="1546.60" y="1002.22" font-size="16.00" fill="#f4f4f4" textLength="43.65" lengthAdjust="spacingAndGlyphs" clip-path="url(#clipTab)">0,2413</text>
<text x="1622.20" y="1002.22" font-size="16.00" fill="#f4f4f4" textLength="43.65" lengthAdjust="spacingAndGlyphs" clip-path="url(#clipTab)">0,2512</text>
<text x="1697.80" y="1002.22" font-size="16.00" fill="#f4f4f4" textLength="43.65" lengthAdjust="spacingAndGlyphs" clip-path="url(#clipTab)">0,0484</text>
<text x="1773.40" y="1002.22" font-size="16.00" fill="#f4f4f4" textLength="43.65" lengthAdjust="spacingAndGlyphs" clip-path="url(#clipTab)">0,1326</text>
<text x="1849.00" y="1002.22" font-size="16.00" fill="#f4f4f4" textLength="43.65" lengthAdjust="spacingAndGlyphs" clip-path="url(#clipTab)">0,4910</text>
<text x="733.60" y="1028.99" font-size="16.00" fill="#f4f4f4" font-weight="bold" textLength="46.20" lengthAdjust="spacingAndGlyphs" stroke="#f4f4f4" stroke-width="0.3">ΔE ITP</text>
<text x="866.20" y="1028.99" font-size="16.00" fill="#f4f4f4" textLength="43.65" lengthAdjust="spacingAndGlyphs" clip-path="url(#clipTab)">0,0057</text>
<text x="941.80" y="1028.99" font-size="16.00" fill="#f4f4f4" textLength="43.65" lengthAdjust="spacingAndGlyphs" clip-path="url(#clipTab)">4,0034</text>
<text x="1017.40" y="1028.99" font-size="16.00" fill="#f4f4f4" textLength="43.65" lengthAdjust="spacingAndGlyphs" clip-path="url(#clipTab)">1,8260</text>
<text x="1093.00" y="1028.99" font-size="16.00" fill="#f4f4f4" textLength="43.65" lengthAdjust="spacingAndGlyphs" clip-path="url(#clipTab)">0,6985</text>
<text x="1168.60" y="1028.99" font-size="16.00" fill="#f4f4f4" textLength="43.65" lengthAdjust="spacingAndGlyphs" clip-path="url(#clipTab)">0,8220</text>
<text x="1244.20" y="1028.99" font-size="16.00" fill="#f4f4f4" textLength="43.65" lengthAdjust="spacingAndGlyphs" clip-path="url(#clipTab)">0,5045</text>
<text x="1319.80" y="1028.99" font-size="16.00" fill="#f4f4f4" textLength="43.65" lengthAdjust="spacingAndGlyphs" clip-path="url(#clipTab)">0,9708</text>
<text x="1395.40" y="1028.99" font-size="16.00" fill="#f4f4f4" textLength="43.65" lengthAdjust="spacingAndGlyphs" clip-path="url(#clipTab)">0,8160</text>
<text x="1471.00" y="1028.99" font-size="16.00" fill="#f4f4f4" textLength="43.65" lengthAdjust="spacingAndGlyphs" clip-path="url(#clipTab)">0,3515</text>
<text x="1546.60" y="1028.99" font-size="16.00" fill="#f4f4f4" textLength="43.65" lengthAdjust="spacingAndGlyphs" clip-path="url(#clipTab)">0,7104</text>
<text x="1622.20" y="1028.99" font-size="16.00" fill="#f4f4f4" textLength="43.65" lengthAdjust="spacingAndGlyphs" clip-path="url(#clipTab)">0,4022</text>
<text x="1697.80" y="1028.99" font-size="16.00" fill="#f4f4f4" textLength="43.65" lengthAdjust="spacingAndGlyphs" clip-path="url(#clipTab)">0,0892</text>
<text x="1773.40" y="1028.99" font-size="16.00" fill="#f4f4f4" textLength="43.65" lengthAdjust="spacingAndGlyphs" clip-path="url(#clipTab)">0,3208</text>
<text x="1849.00" y="1028.99" font-size="16.00" fill="#f4f4f4" textLength="43.65" lengthAdjust="spacingAndGlyphs" clip-path="url(#clipTab)">0,6555</text>
<text x="896.60" y="812.90" font-size="15.20" fill="#f4f4f4" textLength="7.60" lengthAdjust="spacingAndGlyphs">0</text>
<text x="972.20" y="812.90" font-size="15.20" fill="#f4f4f4" textLength="7.60" lengthAdjust="spacingAndGlyphs">5</text>
<text x="1044.00" y="812.90" font-size="15.20" fill="#f4f4f4" textLength="15.20" lengthAdjust="spacingAndGlyphs">10</text>
<text x="1119.60" y="812.90" font-size="15.20" fill="#f4f4f4" textLength="15.20" lengthAdjust="spacingAndGlyphs">15</text>
<text x="1195.20" y="812.90" font-size="15.20" fill="#f4f4f4" textLength="15.20" lengthAdjust="spacingAndGlyphs">20</text>
<text x="1270.80" y="812.90" font-size="15.20" fill="#f4f4f4" textLength="15.20" lengthAdjust="spacingAndGlyphs">25</text>
<text x="1346.40" y="812.90" font-size="15.20" fill="#f4f4f4" textLength="15.20" lengthAdjust="spacingAndGlyphs">30</text>
<text x="1422.00" y="812.90" font-size="15.20" fill="#f4f4f4" textLength="15.20" lengthAdjust="spacingAndGlyphs">35</text>
<text x="1497.60" y="812.90" font-size="15.20" fill="#f4f4f4" textLength="15.20" lengthAdjust="spacingAndGlyphs">40</text>
<text x="1573.20" y="812.90" font-size="15.20" fill="#f4f4f4" textLength="15.20" lengthAdjust="spacingAndGlyphs">45</text>
<text x="1648.80" y="812.90" font-size="15.20" fill="#f4f4f4" textLength="15.20" lengthAdjust="spacingAndGlyphs">50</text>
<text x="1724.40" y="812.90" font-size="15.20" fill="#f4f4f4" textLength="15.20" lengthAdjust="spacingAndGlyphs">55</text>
<text x="1800.00" y="812.90" font-size="15.20" fill="#f4f4f4" textLength="15.20" lengthAdjust="spacingAndGlyphs">60</text>
<text x="1875.60" y="812.90" font-size="15.20" fill="#f4f4f4" textLength="15.20" lengthAdjust="spacingAndGlyphs">65</text>
<text x="33.93" y="1126.20" font-size="10.80" fill="#2b2b2b" font-weight="bold" textLength="6.55" lengthAdjust="spacingAndGlyphs">0</text>
<text x="107.92" y="1126.20" font-size="10.80" fill="#2b2b2b" font-weight="bold" textLength="6.55" lengthAdjust="spacingAndGlyphs">5</text>
<text x="178.65" y="1126.20" font-size="10.80" fill="#2b2b2b" font-weight="bold" textLength="13.10" lengthAdjust="spacingAndGlyphs">10</text>
<text x="252.65" y="1126.20" font-size="10.80" fill="#2b2b2b" font-weight="bold" textLength="13.10" lengthAdjust="spacingAndGlyphs">15</text>
<text x="326.65" y="1126.20" font-size="10.80" fill="#2b2b2b" font-weight="bold" textLength="13.10" lengthAdjust="spacingAndGlyphs">20</text>
<text x="400.65" y="1126.20" font-size="10.80" fill="#2b2b2b" font-weight="bold" textLength="13.10" lengthAdjust="spacingAndGlyphs">25</text>
<text x="474.65" y="1126.20" font-size="10.80" fill="#2b2b2b" font-weight="bold" textLength="13.10" lengthAdjust="spacingAndGlyphs">30</text>
<text x="548.65" y="1126.20" font-size="10.80" fill="#2b2b2b" font-weight="bold" textLength="13.10" lengthAdjust="spacingAndGlyphs">35</text>
<text x="622.65" y="1126.20" font-size="10.80" fill="#2b2b2b" font-weight="bold" textLength="13.10" lengthAdjust="spacingAndGlyphs">40</text>
<text x="696.65" y="1126.20" font-size="10.80" fill="#2b2b2b" font-weight="bold" textLength="13.10" lengthAdjust="spacingAndGlyphs">45</text>
<text x="770.65" y="1126.20" font-size="10.80" fill="#2b2b2b" font-weight="bold" textLength="13.10" lengthAdjust="spacingAndGlyphs">50</text>
<text x="844.65" y="1126.20" font-size="10.80" fill="#2b2b2b" font-weight="bold" textLength="13.10" lengthAdjust="spacingAndGlyphs">55</text>
<text x="918.65" y="1126.20" font-size="10.80" fill="#2b2b2b" font-weight="bold" textLength="13.10" lengthAdjust="spacingAndGlyphs">60</text>
<text x="992.65" y="1126.20" font-size="10.80" fill="#2b2b2b" font-weight="bold" textLength="13.10" lengthAdjust="spacingAndGlyphs">65</text>
<text x="1066.65" y="1126.20" font-size="10.80" fill="#2b2b2b" font-weight="bold" textLength="13.10" lengthAdjust="spacingAndGlyphs">70</text>
<text x="1140.65" y="1126.20" font-size="10.80" fill="#2b2b2b" font-weight="bold" textLength="13.10" lengthAdjust="spacingAndGlyphs">75</text>
<text x="1214.65" y="1126.20" font-size="10.80" fill="#2b2b2b" font-weight="bold" textLength="13.10" lengthAdjust="spacingAndGlyphs">80</text>
<text x="1288.65" y="1126.20" font-size="10.80" fill="#2b2b2b" font-weight="bold" textLength="13.10" lengthAdjust="spacingAndGlyphs">85</text>
<text x="1362.65" y="1126.20" font-size="10.80" fill="#2b2b2b" font-weight="bold" textLength="13.10" lengthAdjust="spacingAndGlyphs">90</text>
<text x="1436.65" y="1126.20" font-size="10.80" fill="#2b2b2b" font-weight="bold" textLength="13.10" lengthAdjust="spacingAndGlyphs">95</text>
<text x="1507.37" y="1126.20" font-size="10.80" fill="#fff" font-weight="bold" textLength="19.65" lengthAdjust="spacingAndGlyphs">100</text>
<text x="1677.00" y="1136.60" font-size="27.38" fill="#313131" textLength="56.60" lengthAdjust="spacingAndGlyphs" stroke="#313131" stroke-width="0.55">Back</text>
<text x="1796.60" y="1136.60" font-size="27.38" fill="#313131" textLength="58.40" lengthAdjust="spacingAndGlyphs" stroke="#313131" stroke-width="0.55">Next</text>
</svg>
</div>
</body>
</html>
